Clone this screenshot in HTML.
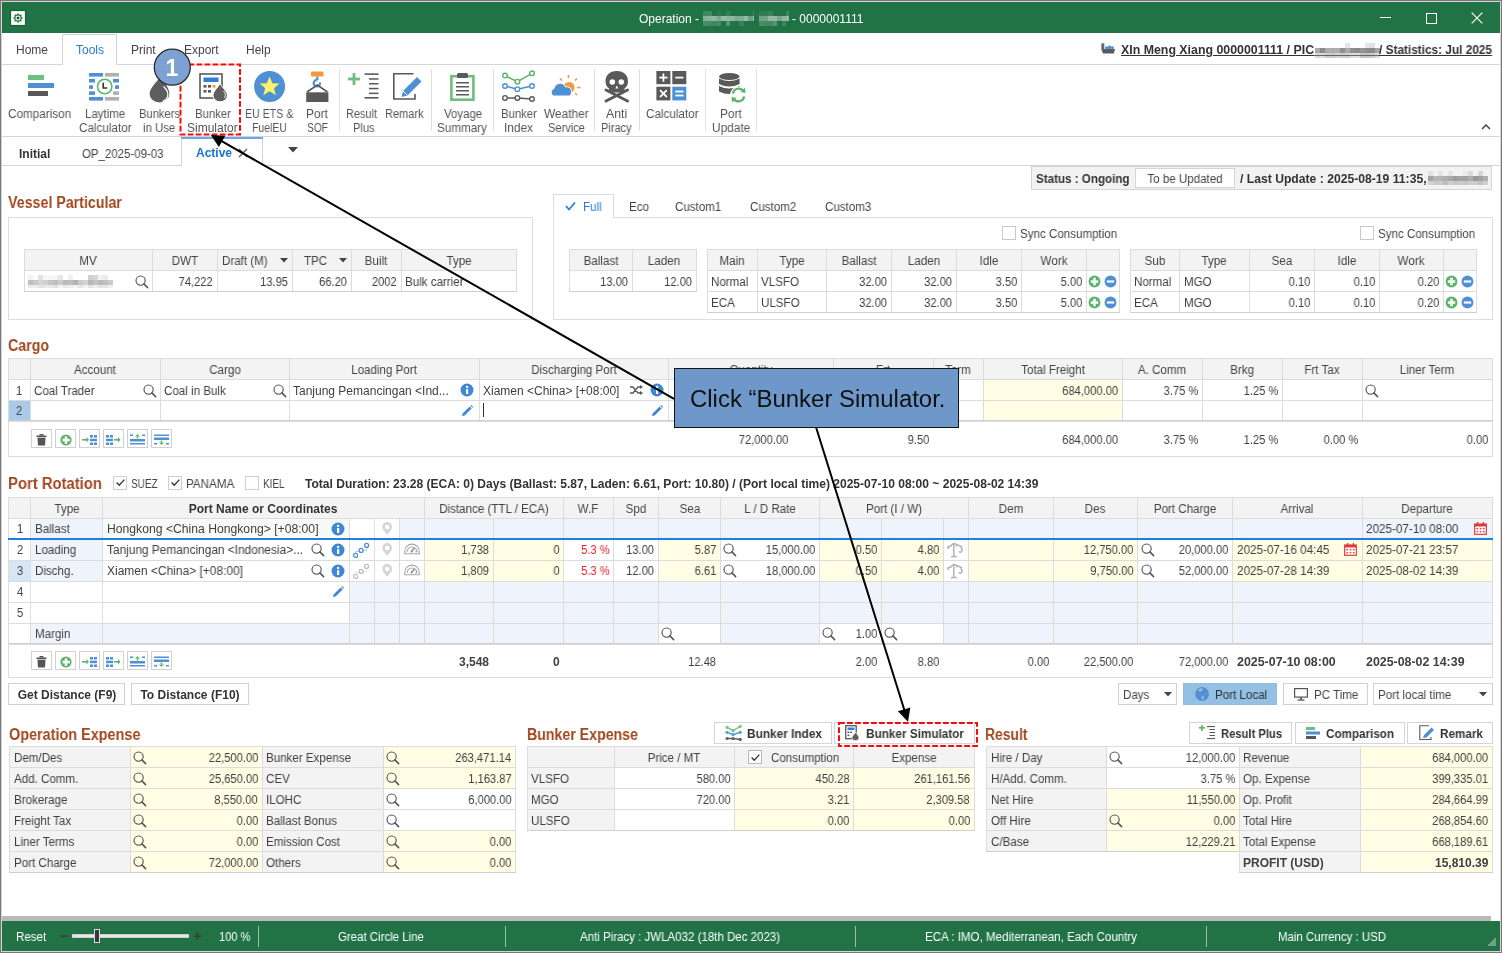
<!DOCTYPE html>
<html><head><meta charset="utf-8"><style>
html,body{margin:0;padding:0;width:1502px;height:953px;overflow:hidden;background:#fff}
body{position:relative;font-family:"Liberation Sans",sans-serif;font-size:12px;color:#404040}
div{position:absolute;box-sizing:border-box}
.t{white-space:nowrap;will-change:transform}
svg{overflow:visible}
</style></head><body>
<div style="left:0px;top:0px;width:1502px;height:953px;background:#fff"></div>
<div style="left:0px;top:0px;width:1502px;height:953px;background:#787878"></div>
<div style="left:1px;top:1px;width:1500px;height:951px;background:#d4d4d4"></div>
<div style="left:2px;top:2px;width:1498px;height:949px;background:#fff"></div>
<div style="left:2px;top:2px;width:1498px;height:31px;background:#217346"></div>
<svg style="position:absolute;left:10px;top:10px;" width="16" height="16" viewBox="0 0 16 16"><rect x="0.5" y="0.5" width="15" height="15" fill="#fff" stroke="#0e6a2c" stroke-width="1.2"/><g fill="#1f6e3a"><path d="M8 3 L9.3 4.7 L11.5 4.5 L11.3 6.7 L13 8 L11.3 9.3 L11.5 11.5 L9.3 11.3 L8 13 L6.7 11.3 L4.5 11.5 L4.7 9.3 L3 8 L4.7 6.7 L4.5 4.5 L6.7 4.7 Z"/></g><circle cx="8" cy="8" r="2.6" fill="#e8f2ea"/><circle cx="8" cy="8" r="1.3" fill="#0a4a20"/></svg>
<div class="t" style="left:639px;top:10.5px;height:16px;line-height:16px;color:#fff;font-size:12px">Operation -</div>
<div style="left:703px;top:11px;width:4.5px;height:5px;background:rgb(64,134,96)"></div><div style="left:707.5px;top:11px;width:4.5px;height:5px;background:rgb(66,136,98)"></div><div style="left:716.5px;top:11px;width:4.5px;height:5px;background:rgb(44,122,79)"></div><div style="left:725.5px;top:11px;width:4.5px;height:5px;background:rgb(52,127,86)"></div><div style="left:752.5px;top:11px;width:1.5px;height:5px;background:rgb(68,137,99)"></div><div style="left:703px;top:16px;width:4.5px;height:5px;background:rgb(128,175,149)"></div><div style="left:707.5px;top:16px;width:4.5px;height:5px;background:rgb(136,180,156)"></div><div style="left:712.0px;top:16px;width:4.5px;height:5px;background:rgb(141,183,160)"></div><div style="left:716.5px;top:16px;width:4.5px;height:5px;background:rgb(116,167,139)"></div><div style="left:721.0px;top:16px;width:4.5px;height:5px;background:rgb(147,187,165)"></div><div style="left:725.5px;top:16px;width:4.5px;height:5px;background:rgb(139,182,158)"></div><div style="left:730.0px;top:16px;width:4.5px;height:5px;background:rgb(139,181,158)"></div><div style="left:734.5px;top:16px;width:4.5px;height:5px;background:rgb(121,170,143)"></div><div style="left:739.0px;top:16px;width:4.5px;height:5px;background:rgb(124,172,146)"></div><div style="left:743.5px;top:16px;width:4.5px;height:5px;background:rgb(148,187,166)"></div><div style="left:748.0px;top:16px;width:4.5px;height:5px;background:rgb(107,161,131)"></div><div style="left:752.5px;top:16px;width:1.5px;height:5px;background:rgb(153,190,170)"></div><div style="left:703px;top:21px;width:4.5px;height:5px;background:rgb(74,141,104)"></div><div style="left:707.5px;top:21px;width:4.5px;height:5px;background:rgb(69,138,100)"></div><div style="left:712.0px;top:21px;width:4.5px;height:5px;background:rgb(64,134,95)"></div><div style="left:716.5px;top:21px;width:4.5px;height:5px;background:rgb(72,140,103)"></div><div style="left:725.5px;top:21px;width:4.5px;height:5px;background:rgb(85,148,114)"></div><div style="left:739.0px;top:21px;width:4.5px;height:5px;background:rgb(56,130,89)"></div>
<div style="left:759px;top:11px;width:4.5px;height:5px;background:rgb(47,124,82)"></div><div style="left:763.5px;top:11px;width:4.5px;height:5px;background:rgb(49,125,84)"></div><div style="left:768.0px;top:11px;width:4.5px;height:5px;background:rgb(59,131,91)"></div><div style="left:786.0px;top:11px;width:3.0px;height:5px;background:rgb(64,134,96)"></div><div style="left:759px;top:16px;width:4.5px;height:5px;background:rgb(109,163,133)"></div><div style="left:763.5px;top:16px;width:4.5px;height:5px;background:rgb(111,164,135)"></div><div style="left:768.0px;top:16px;width:4.5px;height:5px;background:rgb(145,186,163)"></div><div style="left:772.5px;top:16px;width:4.5px;height:5px;background:rgb(144,185,162)"></div><div style="left:777.0px;top:16px;width:4.5px;height:5px;background:rgb(116,167,139)"></div><div style="left:781.5px;top:16px;width:4.5px;height:5px;background:rgb(140,182,159)"></div><div style="left:786.0px;top:16px;width:3.0px;height:5px;background:rgb(148,187,166)"></div><div style="left:759px;top:21px;width:4.5px;height:5px;background:rgb(73,140,103)"></div><div style="left:763.5px;top:21px;width:4.5px;height:5px;background:rgb(69,138,100)"></div><div style="left:768.0px;top:21px;width:4.5px;height:5px;background:rgb(68,137,99)"></div><div style="left:772.5px;top:21px;width:4.5px;height:5px;background:rgb(86,148,114)"></div><div style="left:781.5px;top:21px;width:4.5px;height:5px;background:rgb(62,133,94)"></div>
<div class="t" style="left:792px;top:10.5px;height:16px;line-height:16px;color:#fff;font-size:12px">- 0000001111</div>
<div style="left:1380px;top:17px;width:11px;height:1px;background:#fff"></div>
<div style="left:1426px;top:13px;width:11px;height:11px;border:1px solid #fff;box-sizing:border-box"></div>
<svg style="position:absolute;left:1471px;top:12px;" width="12" height="12" viewBox="0 0 12 12"><line x1="0.7" y1="0.7" x2="11.3" y2="11.3" stroke="#fff" stroke-width="1.2"/><line x1="11.3" y1="0.7" x2="0.7" y2="11.3" stroke="#fff" stroke-width="1.2"/></svg>
<div style="left:2px;top:64px;width:1498px;height:1px;background:#d5d5d5"></div>
<div style="left:62px;top:34px;width:55px;height:31px;background:#fff;border:1px solid #d5d5d5;border-bottom:none;box-sizing:border-box"></div>
<div class="t" style="left:16px;top:42.0px;height:16px;line-height:16px;color:#444;font-size:12px">Home</div>
<div class="t" style="left:76px;top:42.0px;height:16px;line-height:16px;color:#2a7bd0;font-size:12px">Tools</div>
<div class="t" style="left:130.5px;top:42.0px;height:16px;line-height:16px;color:#444;font-size:12px">Print</div>
<div class="t" style="left:183.5px;top:42.0px;height:16px;line-height:16px;color:#444;font-size:12px">Export</div>
<div class="t" style="left:245.5px;top:42.0px;height:16px;line-height:16px;color:#444;font-size:12px">Help</div>
<svg style="position:absolute;left:1101px;top:43px;" width="15" height="11" viewBox="0 0 15 11"><path d="M0.3 6 L14 6 L12.8 10.6 L2 10.6 Z" fill="#5a5a5a"/><rect x="0.3" y="0.3" width="3" height="6" fill="#6a6a6a"/><g fill="#4f8fd4"><circle cx="5.6" cy="4.8" r="1.6"/><circle cx="8.6" cy="4.3" r="1.9"/><circle cx="11.5" cy="4.8" r="1.5"/></g></svg>
<div class="t" style="left:1121px;top:42.0px;height:16px;line-height:16px;font-size:12px;font-weight:bold;transform:scaleX(1.0301);transform-origin:0 0;color:#333;text-decoration:underline">XIn Meng Xiang 0000001111 / PIC</div>
<div style="left:1345px;top:43px;width:5px;height:5px;background:rgb(229,229,229)"></div><div style="left:1365px;top:43px;width:5px;height:5px;background:rgb(229,229,229)"></div><div style="left:1370px;top:43px;width:5px;height:5px;background:rgb(225,225,225)"></div><div style="left:1315px;top:48px;width:5px;height:5px;background:rgb(170,170,170)"></div><div style="left:1320px;top:48px;width:5px;height:5px;background:rgb(140,140,140)"></div><div style="left:1325px;top:48px;width:5px;height:5px;background:rgb(172,172,172)"></div><div style="left:1330px;top:48px;width:5px;height:5px;background:rgb(173,173,173)"></div><div style="left:1335px;top:48px;width:5px;height:5px;background:rgb(174,174,174)"></div><div style="left:1340px;top:48px;width:5px;height:5px;background:rgb(142,142,142)"></div><div style="left:1345px;top:48px;width:5px;height:5px;background:rgb(170,170,170)"></div><div style="left:1350px;top:48px;width:5px;height:5px;background:rgb(142,142,142)"></div><div style="left:1355px;top:48px;width:5px;height:5px;background:rgb(138,138,138)"></div><div style="left:1360px;top:48px;width:5px;height:5px;background:rgb(150,150,150)"></div><div style="left:1365px;top:48px;width:5px;height:5px;background:rgb(139,139,139)"></div><div style="left:1370px;top:48px;width:5px;height:5px;background:rgb(138,138,138)"></div><div style="left:1375px;top:48px;width:5px;height:5px;background:rgb(166,166,166)"></div><div style="left:1315px;top:53px;width:5px;height:5px;background:rgb(217,217,217)"></div><div style="left:1320px;top:53px;width:5px;height:5px;background:rgb(220,220,220)"></div><div style="left:1325px;top:53px;width:5px;height:5px;background:rgb(203,203,203)"></div><div style="left:1330px;top:53px;width:5px;height:5px;background:rgb(200,200,200)"></div><div style="left:1335px;top:53px;width:5px;height:5px;background:rgb(212,212,212)"></div><div style="left:1340px;top:53px;width:5px;height:5px;background:rgb(207,207,207)"></div><div style="left:1345px;top:53px;width:5px;height:5px;background:rgb(207,207,207)"></div><div style="left:1350px;top:53px;width:5px;height:5px;background:rgb(220,220,220)"></div><div style="left:1355px;top:53px;width:5px;height:5px;background:rgb(222,222,222)"></div><div style="left:1360px;top:53px;width:5px;height:5px;background:rgb(195,195,195)"></div><div style="left:1365px;top:53px;width:5px;height:5px;background:rgb(197,197,197)"></div><div style="left:1370px;top:53px;width:5px;height:5px;background:rgb(204,204,204)"></div><div style="left:1375px;top:53px;width:5px;height:5px;background:rgb(221,221,221)"></div>
<div style="left:1314px;top:55px;width:66px;height:1px;background:#666"></div>
<div class="t" style="left:1379.3px;top:42.0px;height:16px;line-height:16px;font-size:12px;font-weight:bold;transform:scaleX(0.9854);transform-origin:0 0;color:#333;text-decoration:underline">/ Statistics: Jul 2025</div>
<div style="left:2px;top:136px;width:1498px;height:1px;background:#d5d5d5"></div>
<svg style="position:absolute;left:1481px;top:123px;" width="10" height="7" viewBox="0 0 10 7"><polyline points="1,6 5,2 9,6" fill="none" stroke="#444" stroke-width="1.5"/></svg>
<div style="left:2px;top:165px;width:179px;height:1px;background:#d5d5d5"></div>
<div style="left:263px;top:165px;width:1237px;height:1px;background:#d5d5d5"></div>
<div style="left:181px;top:137px;width:1px;height:29px;background:#d5d5d5"></div>
<div style="left:262px;top:137px;width:1px;height:29px;background:#d5d5d5"></div>
<div style="left:181px;top:137px;width:82px;height:2px;background:#6aa6ea"></div>
<div class="t" style="left:18.5px;top:145.5px;height:16px;line-height:16px;color:#333;font-weight:bold;font-size:12px">Initial</div>
<div class="t" style="left:81.6px;top:145.5px;height:16px;line-height:16px;font-size:12px;transform:scaleX(0.9546);transform-origin:0 0;color:#444">OP_2025-09-03</div>
<div class="t" style="left:195.7px;top:145.2px;height:16px;line-height:16px;color:#1a73d0;font-weight:bold;font-size:12px">Active</div>
<svg style="position:absolute;left:238px;top:148px;" width="10" height="10" viewBox="0 0 10 10"><line x1="1" y1="1" x2="9" y2="9" stroke="#555" stroke-width="1.2"/><line x1="9" y1="1" x2="1" y2="9" stroke="#555" stroke-width="1.2"/></svg>
<svg style="position:absolute;left:288px;top:147px;" width="10" height="6" viewBox="0 0 10 6"><path d="M0 0 L10 0 L5 5.5 Z" fill="#444"/></svg>
<div style="left:339px;top:69px;width:1px;height:62px;background:#e0e0e0"></div>
<div style="left:431px;top:69px;width:1px;height:62px;background:#e0e0e0"></div>
<div style="left:493px;top:69px;width:1px;height:62px;background:#e0e0e0"></div>
<div style="left:594px;top:69px;width:1px;height:62px;background:#e0e0e0"></div>
<div style="left:639px;top:69px;width:1px;height:62px;background:#e0e0e0"></div>
<div style="left:705px;top:69px;width:1px;height:62px;background:#e0e0e0"></div>
<div style="left:756px;top:69px;width:1px;height:62px;background:#e0e0e0"></div>
<div style="left:28px;top:75px;width:16px;height:5px;background:#6cbf7c"></div>
<div style="left:28px;top:83px;width:26px;height:5px;background:#4f8fd4"></div>
<div style="left:28px;top:91px;width:20px;height:5px;background:#595959"></div>
<div class="t" style="left:8px;top:105.8px;height:16px;line-height:16px;font-size:12px;transform:scaleX(0.9768);transform-origin:0 0;color:#555;font-size:12px">Comparison</div>
<svg style="position:absolute;left:88.8px;top:72.7px;" width="30" height="28" viewBox="0 0 30 28"><rect x="0" y="0.0" width="14" height="3.6" fill="#4f8fd4"/><rect x="16" y="0.0" width="14" height="3.6" fill="#b0b0b0"/><rect x="0" y="5.8999999999999915" width="6" height="3.6" fill="#4f8fd4"/><rect x="24" y="5.8999999999999915" width="6" height="3.6" fill="#4f8fd4"/><rect x="0" y="12.299999999999997" width="4" height="3.6" fill="#4f8fd4"/><rect x="26" y="12.299999999999997" width="4" height="3.6" fill="#4f8fd4"/><rect x="0" y="18.299999999999997" width="6" height="3.6" fill="#4f8fd4"/><rect x="24" y="18.299999999999997" width="6" height="3.6" fill="#b0b0b0"/><rect x="0" y="24.0" width="14" height="3.6" fill="#4f8fd4"/><rect x="16" y="24.0" width="14" height="3.6" fill="#b0b0b0"/><circle cx="15.7" cy="13.5" r="7.2" fill="#fff" stroke="#5cb46c" stroke-width="1.6"/><polyline points="14.2,9.8 14.2,15 18.2,15" fill="none" stroke="#333" stroke-width="1.6"/></svg>
<div class="t" style="left:84.9px;top:105.8px;height:16px;line-height:16px;font-size:12px;transform:scaleX(0.9592);transform-origin:0 0;color:#555;font-size:12px">Laytime</div>
<div class="t" style="left:78.9px;top:119.8px;height:16px;line-height:16px;font-size:12px;transform:scaleX(0.9735);transform-origin:0 0;color:#555;font-size:12px">Calculator</div>
<svg style="position:absolute;left:149px;top:76px;" width="22" height="27" viewBox="0 0 22 27"><path d="M11.5 0.5 C8 6 0.6 12 0.6 18 A9.9 8.4 0 0 0 20.4 18 C20.4 12 15 6 11.5 0.5 Z" fill="#5e5e5e"/><path d="M14.5 10.5 C18.5 14 19.5 18 18.5 21 C17.5 23.5 15.5 25 13.5 25.5" fill="none" stroke="#fff" stroke-width="1.2"/></svg>
<div class="t" style="left:138.8px;top:105.8px;height:16px;line-height:16px;font-size:12px;transform:scaleX(0.9315);transform-origin:0 0;color:#555;font-size:12px">Bunkers</div>
<div class="t" style="left:142.5px;top:119.8px;height:16px;line-height:16px;font-size:12px;transform:scaleX(0.9496);transform-origin:0 0;color:#555;font-size:12px">in Use</div>
<svg style="position:absolute;left:199px;top:73px;" width="30" height="29" viewBox="0 0 30 29"><rect x="1" y="1" width="22" height="24" fill="#fff" stroke="#595959" stroke-width="1.6"/><rect x="4.5" y="4.5" width="15" height="4.5" fill="#2f7ed8"/><g fill="#595959"><rect x="4.5" y="12" width="3" height="2.6"/><rect x="9" y="12" width="3" height="2.6"/><rect x="4.5" y="17" width="3" height="2.6"/><rect x="9" y="17" width="3" height="2.6"/></g><rect x="13.5" y="12" width="3" height="2.6" fill="#f0a030"/><path d="M21 10.5 C18.5 15 14 18.5 14 22.5 A7.2 6.3 0 0 0 28.4 22.5 C28.4 18.5 23.5 15 21 10.5 Z" fill="#5e5e5e" stroke="#fff" stroke-width="1"/><path d="M24.5 18 C26.5 20 27 22.5 25.5 25" fill="none" stroke="#fff" stroke-width="0.9"/></svg>
<div class="t" style="left:194.7px;top:105.8px;height:16px;line-height:16px;font-size:12px;transform:scaleX(0.9470);transform-origin:0 0;color:#555;font-size:12px">Bunker</div>
<div class="t" style="left:187.4px;top:119.8px;height:16px;line-height:16px;font-size:12px;transform:scaleX(0.9983);transform-origin:0 0;color:#555;font-size:12px">Simulator</div>
<svg style="position:absolute;left:253.5px;top:71px;" width="32" height="32" viewBox="0 0 32 32"><circle cx="15.6" cy="15.5" r="15.5" fill="#4f8fd4"/><path d="M15.6 5.5 L18.4 12.3 L25.5 12.6 L20 17.2 L21.9 24.2 L15.6 20.3 L9.3 24.2 L11.2 17.2 L5.7 12.6 L12.8 12.3 Z" fill="#f7f16b"/></svg>
<div class="t" style="left:245.3px;top:105.8px;height:16px;line-height:16px;font-size:12px;transform:scaleX(0.8837);transform-origin:0 0;color:#555;font-size:12px">EU ETS &amp;</div>
<div class="t" style="left:252px;top:119.8px;height:16px;line-height:16px;font-size:12px;transform:scaleX(0.8747);transform-origin:0 0;color:#555;font-size:12px">FuelEU</div>
<svg style="position:absolute;left:305.5px;top:71px;" width="23" height="32" viewBox="0 0 23 32"><rect x="5" y="0.5" width="12.5" height="5" rx="1" fill="#f39a3c"/><path d="M11.3 5.5 L11.3 9" stroke="#4f8fd4" stroke-width="2"/><path d="M14 11.5 A3.2 3.2 0 1 1 11.3 9" fill="none" stroke="#4f8fd4" stroke-width="2.2"/><polyline points="1,21 11.3,14 21.5,21" fill="none" stroke="#595959" stroke-width="1.6"/><rect x="0.2" y="21.3" width="22.2" height="9.7" fill="#595959"/></svg>
<div class="t" style="left:306.3px;top:105.8px;height:16px;line-height:16px;font-size:12px;transform:scaleX(0.9864);transform-origin:0 0;color:#555;font-size:12px">Port</div>
<div class="t" style="left:307px;top:119.8px;height:16px;line-height:16px;font-size:12px;transform:scaleX(0.8517);transform-origin:0 0;color:#555;font-size:12px">SOF</div>
<svg style="position:absolute;left:347.5px;top:73px;" width="31" height="26" viewBox="0 0 31 26"><rect x="0" y="4.6" width="12" height="2.8" fill="#6cbf7c"/><rect x="4.6" y="0" width="2.8" height="12" fill="#6cbf7c"/><g fill="#595959"><rect x="16.5" y="0.3" width="14" height="1.6"/><rect x="21" y="5.2" width="9.5" height="1.5"/><rect x="21" y="10" width="9.5" height="1.5"/><rect x="21" y="14.8" width="9.5" height="1.5"/><rect x="21" y="19.6" width="9.5" height="1.5"/><rect x="16.5" y="24" width="14" height="1.6"/></g></svg>
<div class="t" style="left:346.2px;top:105.8px;height:16px;line-height:16px;font-size:12px;transform:scaleX(0.9113);transform-origin:0 0;color:#555;font-size:12px">Result</div>
<div class="t" style="left:353px;top:119.8px;height:16px;line-height:16px;font-size:12px;transform:scaleX(0.9253);transform-origin:0 0;color:#555;font-size:12px">Plus</div>
<svg style="position:absolute;left:392.5px;top:73px;" width="30" height="27" viewBox="0 0 30 27"><path d="M20.5 0.8 L0.8 0.8 L0.8 26 L22 26 L22 21" fill="none" stroke="#595959" stroke-width="1.6"/><path d="M8.5 24 L10 18 L24 4 L28.5 8.5 L14.5 22.5 Z" fill="#4f8fd4"/><path d="M10 18 L14.5 22.5" stroke="#fff" stroke-width="1"/></svg>
<div class="t" style="left:385.2px;top:105.8px;height:16px;line-height:16px;font-size:12px;transform:scaleX(0.9187);transform-origin:0 0;color:#555;font-size:12px">Remark</div>
<svg style="position:absolute;left:450px;top:73px;" width="26" height="28" viewBox="0 0 26 28"><rect x="1.4" y="3.2" width="22" height="23.5" fill="none" stroke="#6cbf7c" stroke-width="2.6"/><rect x="7" y="0" width="11" height="5" rx="1.5" fill="#595959"/><g fill="#595959"><rect x="6" y="9" width="13" height="1.5"/><rect x="6" y="13" width="13" height="1.5"/><rect x="6" y="17" width="13" height="1.5"/><rect x="6" y="21" width="13" height="1.5"/></g></svg>
<div class="t" style="left:443.8px;top:105.8px;height:16px;line-height:16px;font-size:12px;transform:scaleX(0.9543);transform-origin:0 0;color:#555;font-size:12px">Voyage</div>
<div class="t" style="left:437.1px;top:119.8px;height:16px;line-height:16px;font-size:12px;transform:scaleX(0.9719);transform-origin:0 0;color:#555;font-size:12px">Summary</div>
<svg style="position:absolute;left:501px;top:70px;" width="36" height="34" viewBox="0 0 36 34"><polyline points="4,5.6 16.4,11.7 31,3.3" fill="none" stroke="#5cb46c" stroke-width="1.5"/><circle cx="4" cy="5.6" r="2.3" fill="#fff" stroke="#5cb46c" stroke-width="1.4"/><circle cx="16.4" cy="11.7" r="2.3" fill="#fff" stroke="#5cb46c" stroke-width="1.4"/><circle cx="31" cy="3.3" r="2.3" fill="#fff" stroke="#5cb46c" stroke-width="1.4"/><polyline points="4,16 16.4,19.2 31,16" fill="none" stroke="#4f8fd4" stroke-width="1.5"/><circle cx="4" cy="16" r="2.3" fill="#fff" stroke="#4f8fd4" stroke-width="1.4"/><circle cx="16.4" cy="19.2" r="2.3" fill="#fff" stroke="#4f8fd4" stroke-width="1.4"/><circle cx="31" cy="16" r="2.3" fill="#fff" stroke="#4f8fd4" stroke-width="1.4"/><polyline points="4,27.9 16.4,27.9 31,29" fill="none" stroke="#595959" stroke-width="1.5"/><circle cx="4" cy="27.9" r="2.3" fill="#fff" stroke="#595959" stroke-width="1.4"/><circle cx="16.4" cy="27.9" r="2.3" fill="#fff" stroke="#595959" stroke-width="1.4"/><circle cx="31" cy="29" r="2.3" fill="#fff" stroke="#595959" stroke-width="1.4"/></svg>
<div class="t" style="left:500.6px;top:105.8px;height:16px;line-height:16px;font-size:12px;transform:scaleX(0.9443);transform-origin:0 0;color:#555;font-size:12px">Bunker</div>
<div class="t" style="left:504.2px;top:119.8px;height:16px;line-height:16px;font-size:12px;transform:scaleX(0.9883);transform-origin:0 0;color:#555;font-size:12px">Index</div>
<svg style="position:absolute;left:550px;top:75px;" width="32" height="24" viewBox="0 0 32 24"><g stroke="#f39a3c" stroke-width="1.6"><line x1="18.5" y1="0" x2="18.5" y2="3"/><line x1="10" y1="3.5" x2="12" y2="5.5"/><line x1="27" y1="3.5" x2="25" y2="5.5"/><line x1="27" y1="12.5" x2="30.5" y2="12.5"/><line x1="25" y1="18" x2="27" y2="20"/></g><circle cx="19" cy="12.5" r="5.5" fill="#f39a3c"/><path d="M3.5 21 A4 4 0 0 1 4 13.5 A6 6 0 0 1 15.5 12 A4.6 4.6 0 0 1 21.5 16.5 A4.3 4.3 0 0 1 19.5 21 Z" fill="#4f8fd4" stroke="#fff" stroke-width="1"/></svg>
<div class="t" style="left:544.2px;top:105.8px;height:16px;line-height:16px;font-size:12px;transform:scaleX(0.9884);transform-origin:0 0;color:#555;font-size:12px">Weather</div>
<div class="t" style="left:548.2px;top:119.8px;height:16px;line-height:16px;font-size:12px;transform:scaleX(0.9221);transform-origin:0 0;color:#555;font-size:12px">Service</div>
<svg style="position:absolute;left:604px;top:70px;" width="26" height="33" viewBox="0 0 26 33"><path d="M12.8 1 C20 1 24 5.5 24 11.5 C24 15 22.5 17 20.5 18.5 L20.5 22.5 L5 22.5 L5 18.5 C3 17 1.5 15 1.5 11.5 C1.5 5.5 5.5 1 12.8 1 Z" fill="#595959"/><circle cx="8.3" cy="12" r="2.8" fill="#fff"/><circle cx="17.3" cy="12" r="2.8" fill="#fff"/><path d="M12.8 15.5 L11.3 18.5 L14.3 18.5 Z" fill="#fff"/><g stroke="#595959" stroke-width="3" stroke-linecap="round"><line x1="2" y1="20" x2="23.5" y2="31"/><line x1="23.5" y1="20" x2="2" y2="31"/></g></svg>
<div class="t" style="left:605.8px;top:105.8px;height:16px;line-height:16px;font-size:12px;transform:scaleX(1.0255);transform-origin:0 0;color:#555;font-size:12px">Anti</div>
<div class="t" style="left:601.4px;top:119.8px;height:16px;line-height:16px;font-size:12px;transform:scaleX(0.9177);transform-origin:0 0;color:#555;font-size:12px">Piracy</div>
<svg style="position:absolute;left:655.5px;top:71px;" width="31" height="30" viewBox="0 0 31 30"><rect x="0.4" y="0" width="14" height="13.2" fill="#595959"/><rect x="16.3" y="0" width="14" height="13.2" fill="#595959"/><rect x="0.4" y="15.7" width="14" height="13.7" fill="#595959"/><rect x="16.3" y="15.7" width="14" height="13.7" fill="#4f8fd4"/><g fill="#fff"><rect x="3.3" y="5.7" width="8.2" height="1.8"/><rect x="6.5" y="2.5" width="1.8" height="8.2"/><rect x="19.3" y="5.7" width="8.2" height="1.8"/><rect x="19.3" y="19.6" width="8.2" height="1.8"/><rect x="19.3" y="23.6" width="8.2" height="1.8"/></g><g stroke="#fff" stroke-width="1.8"><line x1="4" y1="19.2" x2="10.8" y2="26"/><line x1="10.8" y1="19.2" x2="4" y2="26"/></g></svg>
<div class="t" style="left:645.7px;top:105.8px;height:16px;line-height:16px;font-size:12px;transform:scaleX(0.9735);transform-origin:0 0;color:#555;font-size:12px">Calculator</div>
<svg style="position:absolute;left:719px;top:73px;" width="28" height="30" viewBox="0 0 28 30"><ellipse cx="10.3" cy="3.5" rx="10.3" ry="3.5" fill="#595959"/><path d="M0 5.5 Q10.3 10.5 20.6 5.5 L20.6 11 Q10.3 16 0 11 Z" fill="#595959"/><path d="M0 13 Q10.3 18 20.6 13 L20.6 18.5 Q10.3 23.5 0 18.5 Z" fill="#595959"/><circle cx="19.5" cy="22" r="8.5" fill="#fff"/><path d="M13.8 20.5 A6 6 0 0 1 24.5 18" fill="none" stroke="#5cb46c" stroke-width="2.2"/><path d="M25.2 23.5 A6 6 0 0 1 14.5 26" fill="none" stroke="#5cb46c" stroke-width="2.2"/><path d="M26 14.5 L26.5 20 L21.5 19 Z" fill="#5cb46c"/><path d="M13 29.5 L12.5 24 L17.5 25 Z" fill="#5cb46c"/></svg>
<div class="t" style="left:719.6px;top:105.8px;height:16px;line-height:16px;font-size:12px;transform:scaleX(0.9818);transform-origin:0 0;color:#555;font-size:12px">Port</div>
<div class="t" style="left:712px;top:119.8px;height:16px;line-height:16px;font-size:12px;transform:scaleX(0.9874);transform-origin:0 0;color:#555;font-size:12px">Update</div>
<div class="t" style="left:8px;top:192.5px;height:20px;line-height:20px;font-size:16px;font-weight:bold;transform:scaleX(0.8892);transform-origin:0 0;color:#a0481f">Vessel Particular</div>
<div style="left:8px;top:217px;width:525px;height:103px;border:1px solid #dcdcdc"></div>
<div style="left:24px;top:249px;width:128px;height:21px;background:#f3f3f3"></div>
<div style="left:152px;top:249px;width:65px;height:21px;background:#f3f3f3"></div>
<div style="left:217px;top:249px;width:75px;height:21px;background:#f3f3f3"></div>
<div style="left:292px;top:249px;width:59px;height:21px;background:#f3f3f3"></div>
<div style="left:351px;top:249px;width:50px;height:21px;background:#f3f3f3"></div>
<div style="left:401px;top:249px;width:115px;height:21px;background:#f3f3f3"></div>
<div style="left:24px;top:270px;width:128px;height:21px;background:#fff"></div>
<div style="left:152px;top:270px;width:65px;height:21px;background:#fff"></div>
<div style="left:217px;top:270px;width:75px;height:21px;background:#fff"></div>
<div style="left:292px;top:270px;width:59px;height:21px;background:#fff"></div>
<div style="left:351px;top:270px;width:50px;height:21px;background:#fff"></div>
<div style="left:401px;top:270px;width:115px;height:21px;background:#fff"></div>
<div style="left:24px;top:249px;width:1px;height:43px;background:#dcdcdc"></div>
<div style="left:152px;top:249px;width:1px;height:43px;background:#dcdcdc"></div>
<div style="left:217px;top:249px;width:1px;height:43px;background:#dcdcdc"></div>
<div style="left:292px;top:249px;width:1px;height:43px;background:#dcdcdc"></div>
<div style="left:351px;top:249px;width:1px;height:43px;background:#dcdcdc"></div>
<div style="left:401px;top:249px;width:1px;height:43px;background:#dcdcdc"></div>
<div style="left:516px;top:249px;width:1px;height:43px;background:#dcdcdc"></div>
<div style="left:24px;top:249px;width:493px;height:1px;background:#dcdcdc"></div>
<div style="left:24px;top:270px;width:493px;height:1px;background:#dcdcdc"></div>
<div style="left:24px;top:291px;width:493px;height:1px;background:#dcdcdc"></div>
<div style="left:24px;top:291px;width:493px;height:1px;background:#cfcfcf"></div>
<div class="t" style="left:-112.0px;top:252.5px;width:400px;height:16px;line-height:16px;text-align:center;transform:scaleX(0.965);transform-origin:50% 0;color:#444">MV</div>
<div class="t" style="left:-15.5px;top:252.5px;width:400px;height:16px;line-height:16px;text-align:center;transform:scaleX(0.965);transform-origin:50% 0;color:#444">DWT</div>
<div class="t" style="left:222px;top:252.5px;height:16px;line-height:16px;transform:scaleX(0.965);transform-origin:0 0;color:#444">Draft (M)</div>
<svg style="position:absolute;left:280px;top:258px;" width="8" height="5" viewBox="0 0 8 5"><path d="M0 0 L8 0 L4 4.5 Z" fill="#444"/></svg>
<div class="t" style="left:304px;top:252.5px;height:16px;line-height:16px;transform:scaleX(0.965);transform-origin:0 0;color:#444">TPC</div>
<svg style="position:absolute;left:339px;top:258px;" width="8" height="5" viewBox="0 0 8 5"><path d="M0 0 L8 0 L4 4.5 Z" fill="#444"/></svg>
<div class="t" style="left:176.0px;top:252.5px;width:400px;height:16px;line-height:16px;text-align:center;transform:scaleX(0.965);transform-origin:50% 0;color:#444">Built</div>
<div class="t" style="left:258.5px;top:252.5px;width:400px;height:16px;line-height:16px;text-align:center;transform:scaleX(0.965);transform-origin:50% 0;color:#444">Type</div>
<div style="left:28px;top:275px;width:5px;height:5px;background:rgb(242,242,242)"></div><div style="left:38px;top:275px;width:5px;height:5px;background:rgb(226,226,226)"></div><div style="left:43px;top:275px;width:5px;height:5px;background:rgb(246,246,246)"></div><div style="left:48px;top:275px;width:5px;height:5px;background:rgb(247,247,247)"></div><div style="left:53px;top:275px;width:5px;height:5px;background:rgb(245,245,245)"></div><div style="left:58px;top:275px;width:5px;height:5px;background:rgb(231,231,231)"></div><div style="left:68px;top:275px;width:5px;height:5px;background:rgb(239,239,239)"></div><div style="left:88px;top:275px;width:5px;height:5px;background:rgb(208,208,208)"></div><div style="left:93px;top:275px;width:5px;height:5px;background:rgb(213,213,213)"></div><div style="left:98px;top:275px;width:5px;height:5px;background:rgb(242,242,242)"></div><div style="left:103px;top:275px;width:5px;height:5px;background:rgb(235,235,235)"></div><div style="left:28px;top:280px;width:5px;height:5px;background:rgb(191,191,191)"></div><div style="left:33px;top:280px;width:5px;height:5px;background:rgb(200,200,200)"></div><div style="left:38px;top:280px;width:5px;height:5px;background:rgb(213,213,213)"></div><div style="left:43px;top:280px;width:5px;height:5px;background:rgb(207,207,207)"></div><div style="left:48px;top:280px;width:5px;height:5px;background:rgb(197,197,197)"></div><div style="left:53px;top:280px;width:5px;height:5px;background:rgb(191,191,191)"></div><div style="left:58px;top:280px;width:5px;height:5px;background:rgb(203,203,203)"></div><div style="left:63px;top:280px;width:5px;height:5px;background:rgb(186,186,186)"></div><div style="left:68px;top:280px;width:5px;height:5px;background:rgb(191,191,191)"></div><div style="left:73px;top:280px;width:5px;height:5px;background:rgb(178,178,178)"></div><div style="left:78px;top:280px;width:5px;height:5px;background:rgb(203,203,203)"></div><div style="left:83px;top:280px;width:5px;height:5px;background:rgb(211,211,211)"></div><div style="left:88px;top:280px;width:5px;height:5px;background:rgb(183,183,183)"></div><div style="left:93px;top:280px;width:5px;height:5px;background:rgb(195,195,195)"></div><div style="left:98px;top:280px;width:5px;height:5px;background:rgb(187,187,187)"></div><div style="left:103px;top:280px;width:5px;height:5px;background:rgb(191,191,191)"></div><div style="left:108px;top:280px;width:5px;height:5px;background:rgb(202,202,202)"></div><div style="left:28px;top:285px;width:5px;height:3px;background:rgb(234,234,234)"></div><div style="left:33px;top:285px;width:5px;height:3px;background:rgb(237,237,237)"></div><div style="left:38px;top:285px;width:5px;height:3px;background:rgb(226,226,226)"></div><div style="left:43px;top:285px;width:5px;height:3px;background:rgb(232,232,232)"></div><div style="left:48px;top:285px;width:5px;height:3px;background:rgb(231,231,231)"></div><div style="left:53px;top:285px;width:5px;height:3px;background:rgb(225,225,225)"></div><div style="left:58px;top:285px;width:5px;height:3px;background:rgb(241,241,241)"></div><div style="left:63px;top:285px;width:5px;height:3px;background:rgb(232,232,232)"></div><div style="left:68px;top:285px;width:5px;height:3px;background:rgb(237,237,237)"></div><div style="left:73px;top:285px;width:5px;height:3px;background:rgb(245,245,245)"></div><div style="left:78px;top:285px;width:5px;height:3px;background:rgb(230,230,230)"></div><div style="left:83px;top:285px;width:5px;height:3px;background:rgb(242,242,242)"></div><div style="left:88px;top:285px;width:5px;height:3px;background:rgb(227,227,227)"></div><div style="left:93px;top:285px;width:5px;height:3px;background:rgb(237,237,237)"></div><div style="left:98px;top:285px;width:5px;height:3px;background:rgb(227,227,227)"></div><div style="left:103px;top:285px;width:5px;height:3px;background:rgb(228,228,228)"></div><div style="left:108px;top:285px;width:5px;height:3px;background:rgb(238,238,238)"></div>
<svg style="position:absolute;left:135px;top:275px;" width="14" height="14" viewBox="0 0 14 14"><circle cx="5.6" cy="5.6" r="4.6" fill="none" stroke="#555" stroke-width="1.15"/><line x1="8.9" y1="8.9" x2="12.6" y2="12.6" stroke="#555" stroke-width="1.5" stroke-linecap="round"/></svg>
<div class="t" style="right:1289px;top:273.5px;height:16px;line-height:16px;text-align:right;transform:scaleX(0.93);transform-origin:100% 0;">74,222</div>
<div class="t" style="right:1214px;top:273.5px;height:16px;line-height:16px;text-align:right;transform:scaleX(0.93);transform-origin:100% 0;">13.95</div>
<div class="t" style="right:1155px;top:273.5px;height:16px;line-height:16px;text-align:right;transform:scaleX(0.93);transform-origin:100% 0;">66.20</div>
<div class="t" style="right:1105px;top:273.5px;height:16px;line-height:16px;text-align:right;transform:scaleX(0.93);transform-origin:100% 0;">2002</div>
<div class="t" style="left:405px;top:273.5px;height:16px;line-height:16px;transform:scaleX(0.965);transform-origin:0 0;">Bulk carrier</div>
<div style="left:553px;top:217px;width:940px;height:103px;border:1px solid #dcdcdc"></div>
<div style="left:553px;top:194px;width:61px;height:24px;background:#fff;border:1px solid #dcdcdc;border-bottom:none"></div>
<svg style="position:absolute;left:565px;top:201px;" width="11" height="10" viewBox="0 0 11 10"><polyline points="1,5 4,8.5 10,1.5" fill="none" stroke="#2a7bd0" stroke-width="1.7"/></svg>
<div class="t" style="left:583px;top:199.0px;height:16px;line-height:16px;transform:scaleX(0.965);transform-origin:0 0;color:#2a7bd0">Full</div>
<div class="t" style="left:629px;top:199.0px;height:16px;line-height:16px;transform:scaleX(0.965);transform-origin:0 0;color:#444">Eco</div>
<div class="t" style="left:675px;top:199.0px;height:16px;line-height:16px;transform:scaleX(0.965);transform-origin:0 0;color:#444">Custom1</div>
<div class="t" style="left:750px;top:199.0px;height:16px;line-height:16px;transform:scaleX(0.965);transform-origin:0 0;color:#444">Custom2</div>
<div class="t" style="left:825px;top:199.0px;height:16px;line-height:16px;transform:scaleX(0.965);transform-origin:0 0;color:#444">Custom3</div>
<div style="left:1002px;top:226px;width:14px;height:14px;border:1px solid #c8c8c8;background:#fff"></div>
<div class="t" style="left:1020px;top:226.0px;height:16px;line-height:16px;transform:scaleX(0.965);transform-origin:0 0;color:#444">Sync Consumption</div>
<div style="left:1360px;top:226px;width:14px;height:14px;border:1px solid #c8c8c8;background:#fff"></div>
<div class="t" style="left:1378px;top:226.0px;height:16px;line-height:16px;transform:scaleX(0.965);transform-origin:0 0;color:#444">Sync Consumption</div>
<div style="left:569px;top:249px;width:63px;height:21px;background:#f3f3f3"></div>
<div style="left:632px;top:249px;width:64px;height:21px;background:#f3f3f3"></div>
<div style="left:569px;top:270px;width:63px;height:21px;background:#fff"></div>
<div style="left:632px;top:270px;width:64px;height:21px;background:#fff"></div>
<div style="left:569px;top:249px;width:1px;height:43px;background:#dcdcdc"></div>
<div style="left:632px;top:249px;width:1px;height:43px;background:#dcdcdc"></div>
<div style="left:696px;top:249px;width:1px;height:43px;background:#dcdcdc"></div>
<div style="left:569px;top:249px;width:128px;height:1px;background:#dcdcdc"></div>
<div style="left:569px;top:270px;width:128px;height:1px;background:#dcdcdc"></div>
<div style="left:569px;top:291px;width:128px;height:1px;background:#dcdcdc"></div>
<div style="left:569px;top:291px;width:128px;height:1px;background:#cfcfcf"></div>
<div class="t" style="left:400.5px;top:252.5px;width:400px;height:16px;line-height:16px;text-align:center;transform:scaleX(0.965);transform-origin:50% 0;color:#444">Ballast</div>
<div class="t" style="left:464.0px;top:252.5px;width:400px;height:16px;line-height:16px;text-align:center;transform:scaleX(0.965);transform-origin:50% 0;color:#444">Laden</div>
<div class="t" style="right:874px;top:273.5px;height:16px;line-height:16px;text-align:right;transform:scaleX(0.93);transform-origin:100% 0;">13.00</div>
<div class="t" style="right:810px;top:273.5px;height:16px;line-height:16px;text-align:right;transform:scaleX(0.93);transform-origin:100% 0;">12.00</div>
<div style="left:707px;top:249px;width:50px;height:21px;background:#f3f3f3"></div>
<div style="left:757px;top:249px;width:69px;height:21px;background:#f3f3f3"></div>
<div style="left:826px;top:249px;width:65px;height:21px;background:#f3f3f3"></div>
<div style="left:891px;top:249px;width:65px;height:21px;background:#f3f3f3"></div>
<div style="left:956px;top:249px;width:65px;height:21px;background:#f3f3f3"></div>
<div style="left:1021px;top:249px;width:65px;height:21px;background:#f3f3f3"></div>
<div style="left:1086px;top:249px;width:33px;height:21px;background:#f3f3f3"></div>
<div style="left:707px;top:270px;width:50px;height:21px;background:#fff"></div>
<div style="left:757px;top:270px;width:69px;height:21px;background:#fff"></div>
<div style="left:826px;top:270px;width:65px;height:21px;background:#fff"></div>
<div style="left:891px;top:270px;width:65px;height:21px;background:#fff"></div>
<div style="left:956px;top:270px;width:65px;height:21px;background:#fff"></div>
<div style="left:1021px;top:270px;width:65px;height:21px;background:#fff"></div>
<div style="left:1086px;top:270px;width:33px;height:21px;background:#fff"></div>
<div style="left:707px;top:291px;width:50px;height:21px;background:#fff"></div>
<div style="left:757px;top:291px;width:69px;height:21px;background:#fff"></div>
<div style="left:826px;top:291px;width:65px;height:21px;background:#fff"></div>
<div style="left:891px;top:291px;width:65px;height:21px;background:#fff"></div>
<div style="left:956px;top:291px;width:65px;height:21px;background:#fff"></div>
<div style="left:1021px;top:291px;width:65px;height:21px;background:#fff"></div>
<div style="left:1086px;top:291px;width:33px;height:21px;background:#fff"></div>
<div style="left:707px;top:249px;width:1px;height:64px;background:#dcdcdc"></div>
<div style="left:757px;top:249px;width:1px;height:64px;background:#dcdcdc"></div>
<div style="left:826px;top:249px;width:1px;height:64px;background:#dcdcdc"></div>
<div style="left:891px;top:249px;width:1px;height:64px;background:#dcdcdc"></div>
<div style="left:956px;top:249px;width:1px;height:64px;background:#dcdcdc"></div>
<div style="left:1021px;top:249px;width:1px;height:64px;background:#dcdcdc"></div>
<div style="left:1086px;top:249px;width:1px;height:64px;background:#dcdcdc"></div>
<div style="left:1119px;top:249px;width:1px;height:64px;background:#dcdcdc"></div>
<div style="left:707px;top:249px;width:413px;height:1px;background:#dcdcdc"></div>
<div style="left:707px;top:270px;width:413px;height:1px;background:#dcdcdc"></div>
<div style="left:707px;top:291px;width:413px;height:1px;background:#dcdcdc"></div>
<div style="left:707px;top:312px;width:413px;height:1px;background:#dcdcdc"></div>
<div style="left:707px;top:312px;width:413px;height:1px;background:#cfcfcf"></div>
<div class="t" style="left:532.0px;top:252.5px;width:400px;height:16px;line-height:16px;text-align:center;transform:scaleX(0.965);transform-origin:50% 0;color:#444">Main</div>
<div class="t" style="left:591.5px;top:252.5px;width:400px;height:16px;line-height:16px;text-align:center;transform:scaleX(0.965);transform-origin:50% 0;color:#444">Type</div>
<div class="t" style="left:658.5px;top:252.5px;width:400px;height:16px;line-height:16px;text-align:center;transform:scaleX(0.965);transform-origin:50% 0;color:#444">Ballast</div>
<div class="t" style="left:723.5px;top:252.5px;width:400px;height:16px;line-height:16px;text-align:center;transform:scaleX(0.965);transform-origin:50% 0;color:#444">Laden</div>
<div class="t" style="left:788.5px;top:252.5px;width:400px;height:16px;line-height:16px;text-align:center;transform:scaleX(0.965);transform-origin:50% 0;color:#444">Idle</div>
<div class="t" style="left:853.5px;top:252.5px;width:400px;height:16px;line-height:16px;text-align:center;transform:scaleX(0.965);transform-origin:50% 0;color:#444">Work</div>
<div class="t" style="left:902.5px;top:252.5px;width:400px;height:16px;line-height:16px;text-align:center;color:#444"></div>
<div class="t" style="left:711px;top:273.5px;height:16px;line-height:16px;transform:scaleX(0.965);transform-origin:0 0;">Normal</div>
<div class="t" style="left:761px;top:273.5px;height:16px;line-height:16px;transform:scaleX(0.965);transform-origin:0 0;">VLSFO</div>
<div class="t" style="right:615px;top:273.5px;height:16px;line-height:16px;text-align:right;transform:scaleX(0.93);transform-origin:100% 0;">32.00</div>
<div class="t" style="right:550px;top:273.5px;height:16px;line-height:16px;text-align:right;transform:scaleX(0.93);transform-origin:100% 0;">32.00</div>
<div class="t" style="right:485px;top:273.5px;height:16px;line-height:16px;text-align:right;transform:scaleX(0.93);transform-origin:100% 0;">3.50</div>
<div class="t" style="right:420px;top:273.5px;height:16px;line-height:16px;text-align:right;transform:scaleX(0.93);transform-origin:100% 0;">5.00</div>
<svg style="position:absolute;left:1088px;top:274.5px;" width="13" height="13" viewBox="0 0 13 13"><circle cx="6.5" cy="6.5" r="5.9" fill="#5cb46c"/><rect x="2.8" y="5.3" width="7.4" height="2.5" fill="#fff"/><rect x="5.25" y="2.8" width="2.5" height="7.4" fill="#fff"/></svg>
<svg style="position:absolute;left:1103.7px;top:274.5px;" width="13" height="13" viewBox="0 0 13 13"><circle cx="6.5" cy="6.5" r="5.9" fill="#4f8fd4"/><rect x="2.8" y="5.4" width="7.4" height="2.2" fill="#fff"/></svg>
<div class="t" style="left:711px;top:294.5px;height:16px;line-height:16px;transform:scaleX(0.965);transform-origin:0 0;">ECA</div>
<div class="t" style="left:761px;top:294.5px;height:16px;line-height:16px;transform:scaleX(0.965);transform-origin:0 0;">ULSFO</div>
<div class="t" style="right:615px;top:294.5px;height:16px;line-height:16px;text-align:right;transform:scaleX(0.93);transform-origin:100% 0;">32.00</div>
<div class="t" style="right:550px;top:294.5px;height:16px;line-height:16px;text-align:right;transform:scaleX(0.93);transform-origin:100% 0;">32.00</div>
<div class="t" style="right:485px;top:294.5px;height:16px;line-height:16px;text-align:right;transform:scaleX(0.93);transform-origin:100% 0;">3.50</div>
<div class="t" style="right:420px;top:294.5px;height:16px;line-height:16px;text-align:right;transform:scaleX(0.93);transform-origin:100% 0;">5.00</div>
<svg style="position:absolute;left:1088px;top:295.5px;" width="13" height="13" viewBox="0 0 13 13"><circle cx="6.5" cy="6.5" r="5.9" fill="#5cb46c"/><rect x="2.8" y="5.3" width="7.4" height="2.5" fill="#fff"/><rect x="5.25" y="2.8" width="2.5" height="7.4" fill="#fff"/></svg>
<svg style="position:absolute;left:1103.7px;top:295.5px;" width="13" height="13" viewBox="0 0 13 13"><circle cx="6.5" cy="6.5" r="5.9" fill="#4f8fd4"/><rect x="2.8" y="5.4" width="7.4" height="2.2" fill="#fff"/></svg>
<div style="left:1130px;top:249px;width:49px;height:21px;background:#f3f3f3"></div>
<div style="left:1179px;top:249px;width:70px;height:21px;background:#f3f3f3"></div>
<div style="left:1249px;top:249px;width:65px;height:21px;background:#f3f3f3"></div>
<div style="left:1314px;top:249px;width:65px;height:21px;background:#f3f3f3"></div>
<div style="left:1379px;top:249px;width:64px;height:21px;background:#f3f3f3"></div>
<div style="left:1443px;top:249px;width:33px;height:21px;background:#f3f3f3"></div>
<div style="left:1130px;top:270px;width:49px;height:21px;background:#fff"></div>
<div style="left:1179px;top:270px;width:70px;height:21px;background:#fff"></div>
<div style="left:1249px;top:270px;width:65px;height:21px;background:#fff"></div>
<div style="left:1314px;top:270px;width:65px;height:21px;background:#fff"></div>
<div style="left:1379px;top:270px;width:64px;height:21px;background:#fff"></div>
<div style="left:1443px;top:270px;width:33px;height:21px;background:#fff"></div>
<div style="left:1130px;top:291px;width:49px;height:21px;background:#fff"></div>
<div style="left:1179px;top:291px;width:70px;height:21px;background:#fff"></div>
<div style="left:1249px;top:291px;width:65px;height:21px;background:#fff"></div>
<div style="left:1314px;top:291px;width:65px;height:21px;background:#fff"></div>
<div style="left:1379px;top:291px;width:64px;height:21px;background:#fff"></div>
<div style="left:1443px;top:291px;width:33px;height:21px;background:#fff"></div>
<div style="left:1130px;top:249px;width:1px;height:64px;background:#dcdcdc"></div>
<div style="left:1179px;top:249px;width:1px;height:64px;background:#dcdcdc"></div>
<div style="left:1249px;top:249px;width:1px;height:64px;background:#dcdcdc"></div>
<div style="left:1314px;top:249px;width:1px;height:64px;background:#dcdcdc"></div>
<div style="left:1379px;top:249px;width:1px;height:64px;background:#dcdcdc"></div>
<div style="left:1443px;top:249px;width:1px;height:64px;background:#dcdcdc"></div>
<div style="left:1476px;top:249px;width:1px;height:64px;background:#dcdcdc"></div>
<div style="left:1130px;top:249px;width:347px;height:1px;background:#dcdcdc"></div>
<div style="left:1130px;top:270px;width:347px;height:1px;background:#dcdcdc"></div>
<div style="left:1130px;top:291px;width:347px;height:1px;background:#dcdcdc"></div>
<div style="left:1130px;top:312px;width:347px;height:1px;background:#dcdcdc"></div>
<div style="left:1130px;top:312px;width:347px;height:1px;background:#cfcfcf"></div>
<div class="t" style="left:954.5px;top:252.5px;width:400px;height:16px;line-height:16px;text-align:center;transform:scaleX(0.965);transform-origin:50% 0;color:#444">Sub</div>
<div class="t" style="left:1014.0px;top:252.5px;width:400px;height:16px;line-height:16px;text-align:center;transform:scaleX(0.965);transform-origin:50% 0;color:#444">Type</div>
<div class="t" style="left:1081.5px;top:252.5px;width:400px;height:16px;line-height:16px;text-align:center;transform:scaleX(0.965);transform-origin:50% 0;color:#444">Sea</div>
<div class="t" style="left:1146.5px;top:252.5px;width:400px;height:16px;line-height:16px;text-align:center;transform:scaleX(0.965);transform-origin:50% 0;color:#444">Idle</div>
<div class="t" style="left:1211.0px;top:252.5px;width:400px;height:16px;line-height:16px;text-align:center;transform:scaleX(0.965);transform-origin:50% 0;color:#444">Work</div>
<div class="t" style="left:1259.5px;top:252.5px;width:400px;height:16px;line-height:16px;text-align:center;color:#444"></div>
<div class="t" style="left:1134px;top:273.5px;height:16px;line-height:16px;transform:scaleX(0.965);transform-origin:0 0;">Normal</div>
<div class="t" style="left:1184px;top:273.5px;height:16px;line-height:16px;transform:scaleX(0.965);transform-origin:0 0;">MGO</div>
<div class="t" style="right:192px;top:273.5px;height:16px;line-height:16px;text-align:right;transform:scaleX(0.93);transform-origin:100% 0;">0.10</div>
<div class="t" style="right:127px;top:273.5px;height:16px;line-height:16px;text-align:right;transform:scaleX(0.93);transform-origin:100% 0;">0.10</div>
<div class="t" style="right:63px;top:273.5px;height:16px;line-height:16px;text-align:right;transform:scaleX(0.93);transform-origin:100% 0;">0.20</div>
<svg style="position:absolute;left:1445.4px;top:274.5px;" width="13" height="13" viewBox="0 0 13 13"><circle cx="6.5" cy="6.5" r="5.9" fill="#5cb46c"/><rect x="2.8" y="5.3" width="7.4" height="2.5" fill="#fff"/><rect x="5.25" y="2.8" width="2.5" height="7.4" fill="#fff"/></svg>
<svg style="position:absolute;left:1461.4px;top:274.5px;" width="13" height="13" viewBox="0 0 13 13"><circle cx="6.5" cy="6.5" r="5.9" fill="#4f8fd4"/><rect x="2.8" y="5.4" width="7.4" height="2.2" fill="#fff"/></svg>
<div class="t" style="left:1134px;top:294.5px;height:16px;line-height:16px;transform:scaleX(0.965);transform-origin:0 0;">ECA</div>
<div class="t" style="left:1184px;top:294.5px;height:16px;line-height:16px;transform:scaleX(0.965);transform-origin:0 0;">MGO</div>
<div class="t" style="right:192px;top:294.5px;height:16px;line-height:16px;text-align:right;transform:scaleX(0.93);transform-origin:100% 0;">0.10</div>
<div class="t" style="right:127px;top:294.5px;height:16px;line-height:16px;text-align:right;transform:scaleX(0.93);transform-origin:100% 0;">0.10</div>
<div class="t" style="right:63px;top:294.5px;height:16px;line-height:16px;text-align:right;transform:scaleX(0.93);transform-origin:100% 0;">0.20</div>
<svg style="position:absolute;left:1445.4px;top:295.5px;" width="13" height="13" viewBox="0 0 13 13"><circle cx="6.5" cy="6.5" r="5.9" fill="#5cb46c"/><rect x="2.8" y="5.3" width="7.4" height="2.5" fill="#fff"/><rect x="5.25" y="2.8" width="2.5" height="7.4" fill="#fff"/></svg>
<svg style="position:absolute;left:1461.4px;top:295.5px;" width="13" height="13" viewBox="0 0 13 13"><circle cx="6.5" cy="6.5" r="5.9" fill="#4f8fd4"/><rect x="2.8" y="5.4" width="7.4" height="2.2" fill="#fff"/></svg>
<div style="left:1031px;top:166px;width:461px;height:24px;background:#f2f2f2;border:1px solid #d5d5d5"></div>
<div class="t" style="left:1036px;top:170.5px;height:16px;line-height:16px;font-size:12px;font-weight:bold;transform:scaleX(0.9677);transform-origin:0 0;color:#333">Status : Ongoing</div>
<div style="left:1135px;top:168px;width:100px;height:20px;background:#fff;border:1px solid #d5d5d5"></div>
<div class="t" style="left:985.0px;top:171.0px;width:400px;height:16px;line-height:16px;text-align:center;transform:scaleX(0.965);transform-origin:50% 0;color:#444">To be Updated</div>
<div class="t" style="left:1239.5px;top:170.5px;height:16px;line-height:16px;font-size:12px;font-weight:bold;transform:scaleX(1.0133);transform-origin:0 0;color:#333">/ Last Update : 2025-08-19 11:35,</div>
<div style="left:1428px;top:171px;width:5px;height:5px;background:rgb(226,226,226)"></div><div style="left:1438px;top:171px;width:5px;height:5px;background:rgb(228,228,228)"></div><div style="left:1448px;top:171px;width:5px;height:5px;background:rgb(228,228,228)"></div><div style="left:1463px;top:171px;width:5px;height:5px;background:rgb(234,234,234)"></div><div style="left:1468px;top:171px;width:5px;height:5px;background:rgb(219,219,219)"></div><div style="left:1478px;top:171px;width:5px;height:5px;background:rgb(213,213,213)"></div><div style="left:1428px;top:176px;width:5px;height:5px;background:rgb(163,163,163)"></div><div style="left:1433px;top:176px;width:5px;height:5px;background:rgb(182,182,182)"></div><div style="left:1438px;top:176px;width:5px;height:5px;background:rgb(180,180,180)"></div><div style="left:1443px;top:176px;width:5px;height:5px;background:rgb(175,175,175)"></div><div style="left:1448px;top:176px;width:5px;height:5px;background:rgb(168,168,168)"></div><div style="left:1453px;top:176px;width:5px;height:5px;background:rgb(157,157,157)"></div><div style="left:1458px;top:176px;width:5px;height:5px;background:rgb(163,163,163)"></div><div style="left:1463px;top:176px;width:5px;height:5px;background:rgb(162,162,162)"></div><div style="left:1468px;top:176px;width:5px;height:5px;background:rgb(174,174,174)"></div><div style="left:1473px;top:176px;width:5px;height:5px;background:rgb(152,152,152)"></div><div style="left:1478px;top:176px;width:5px;height:5px;background:rgb(161,161,161)"></div><div style="left:1483px;top:176px;width:5px;height:5px;background:rgb(175,175,175)"></div><div style="left:1428px;top:181px;width:5px;height:4px;background:rgb(211,211,211)"></div><div style="left:1433px;top:181px;width:5px;height:4px;background:rgb(202,202,202)"></div><div style="left:1438px;top:181px;width:5px;height:4px;background:rgb(203,203,203)"></div><div style="left:1443px;top:181px;width:5px;height:4px;background:rgb(190,190,190)"></div><div style="left:1448px;top:181px;width:5px;height:4px;background:rgb(207,207,207)"></div><div style="left:1453px;top:181px;width:5px;height:4px;background:rgb(200,200,200)"></div><div style="left:1458px;top:181px;width:5px;height:4px;background:rgb(202,202,202)"></div><div style="left:1463px;top:181px;width:5px;height:4px;background:rgb(196,196,196)"></div><div style="left:1468px;top:181px;width:5px;height:4px;background:rgb(206,206,206)"></div><div style="left:1473px;top:181px;width:5px;height:4px;background:rgb(204,204,204)"></div><div style="left:1478px;top:181px;width:5px;height:4px;background:rgb(193,193,193)"></div><div style="left:1483px;top:181px;width:5px;height:4px;background:rgb(206,206,206)"></div>
<div class="t" style="left:8px;top:336.0px;height:20px;line-height:20px;font-size:16px;font-weight:bold;transform:scaleX(0.8862);transform-origin:0 0;color:#a0481f">Cargo</div>
<div style="left:8px;top:358px;width:22px;height:21px;background:#f3f3f3"></div>
<div style="left:30px;top:358px;width:130px;height:21px;background:#f3f3f3"></div>
<div style="left:160px;top:358px;width:129px;height:21px;background:#f3f3f3"></div>
<div style="left:289px;top:358px;width:190px;height:21px;background:#f3f3f3"></div>
<div style="left:479px;top:358px;width:189px;height:21px;background:#f3f3f3"></div>
<div style="left:668px;top:358px;width:165px;height:21px;background:#f3f3f3"></div>
<div style="left:833px;top:358px;width:100px;height:21px;background:#f3f3f3"></div>
<div style="left:933px;top:358px;width:50px;height:21px;background:#f3f3f3"></div>
<div style="left:983px;top:358px;width:139px;height:21px;background:#f3f3f3"></div>
<div style="left:1122px;top:358px;width:80px;height:21px;background:#f3f3f3"></div>
<div style="left:1202px;top:358px;width:80px;height:21px;background:#f3f3f3"></div>
<div style="left:1282px;top:358px;width:80px;height:21px;background:#f3f3f3"></div>
<div style="left:1362px;top:358px;width:130px;height:21px;background:#f3f3f3"></div>
<div style="left:8px;top:379px;width:22px;height:21px;background:#fff"></div>
<div style="left:30px;top:379px;width:130px;height:21px;background:#fff"></div>
<div style="left:160px;top:379px;width:129px;height:21px;background:#fff"></div>
<div style="left:289px;top:379px;width:190px;height:21px;background:#fff"></div>
<div style="left:479px;top:379px;width:189px;height:21px;background:#fff"></div>
<div style="left:668px;top:379px;width:165px;height:21px;background:#fff"></div>
<div style="left:833px;top:379px;width:100px;height:21px;background:#fff"></div>
<div style="left:933px;top:379px;width:50px;height:21px;background:#fff"></div>
<div style="left:983px;top:379px;width:139px;height:21px;background:#fffde3"></div>
<div style="left:1122px;top:379px;width:80px;height:21px;background:#fff"></div>
<div style="left:1202px;top:379px;width:80px;height:21px;background:#fff"></div>
<div style="left:1282px;top:379px;width:80px;height:21px;background:#fff"></div>
<div style="left:1362px;top:379px;width:130px;height:21px;background:#fff"></div>
<div style="left:8px;top:400px;width:22px;height:21px;background:#a9cbe8"></div>
<div style="left:30px;top:400px;width:130px;height:21px;background:#fff"></div>
<div style="left:160px;top:400px;width:129px;height:21px;background:#fff"></div>
<div style="left:289px;top:400px;width:190px;height:21px;background:#fff"></div>
<div style="left:479px;top:400px;width:189px;height:21px;background:#fff"></div>
<div style="left:668px;top:400px;width:165px;height:21px;background:#fff"></div>
<div style="left:833px;top:400px;width:100px;height:21px;background:#fff"></div>
<div style="left:933px;top:400px;width:50px;height:21px;background:#fff"></div>
<div style="left:983px;top:400px;width:139px;height:21px;background:#fffde3"></div>
<div style="left:1122px;top:400px;width:80px;height:21px;background:#fff"></div>
<div style="left:1202px;top:400px;width:80px;height:21px;background:#fff"></div>
<div style="left:1282px;top:400px;width:80px;height:21px;background:#fff"></div>
<div style="left:1362px;top:400px;width:130px;height:21px;background:#fff"></div>
<div style="left:8px;top:358px;width:1px;height:64px;background:#dcdcdc"></div>
<div style="left:30px;top:358px;width:1px;height:64px;background:#dcdcdc"></div>
<div style="left:160px;top:358px;width:1px;height:64px;background:#dcdcdc"></div>
<div style="left:289px;top:358px;width:1px;height:64px;background:#dcdcdc"></div>
<div style="left:479px;top:358px;width:1px;height:64px;background:#dcdcdc"></div>
<div style="left:668px;top:358px;width:1px;height:64px;background:#dcdcdc"></div>
<div style="left:833px;top:358px;width:1px;height:64px;background:#dcdcdc"></div>
<div style="left:933px;top:358px;width:1px;height:64px;background:#dcdcdc"></div>
<div style="left:983px;top:358px;width:1px;height:64px;background:#dcdcdc"></div>
<div style="left:1122px;top:358px;width:1px;height:64px;background:#dcdcdc"></div>
<div style="left:1202px;top:358px;width:1px;height:64px;background:#dcdcdc"></div>
<div style="left:1282px;top:358px;width:1px;height:64px;background:#dcdcdc"></div>
<div style="left:1362px;top:358px;width:1px;height:64px;background:#dcdcdc"></div>
<div style="left:1492px;top:358px;width:1px;height:64px;background:#dcdcdc"></div>
<div style="left:8px;top:358px;width:1485px;height:1px;background:#dcdcdc"></div>
<div style="left:8px;top:379px;width:1485px;height:1px;background:#dcdcdc"></div>
<div style="left:8px;top:400px;width:1485px;height:1px;background:#dcdcdc"></div>
<div style="left:8px;top:421px;width:1485px;height:1px;background:#dcdcdc"></div>
<div style="left:8px;top:421px;width:1485px;height:36px;border:1px solid #dcdcdc;border-top:none"></div>
<div style="left:8px;top:420px;width:1485px;height:1px;background:#cfcfcf"></div>
<div class="t" style="left:-105.0px;top:361.5px;width:400px;height:16px;line-height:16px;text-align:center;transform:scaleX(0.965);transform-origin:50% 0;color:#444">Account</div>
<div class="t" style="left:24.5px;top:361.5px;width:400px;height:16px;line-height:16px;text-align:center;transform:scaleX(0.965);transform-origin:50% 0;color:#444">Cargo</div>
<div class="t" style="left:184.0px;top:361.5px;width:400px;height:16px;line-height:16px;text-align:center;transform:scaleX(0.965);transform-origin:50% 0;color:#444">Loading Port</div>
<div class="t" style="left:373.5px;top:361.5px;width:400px;height:16px;line-height:16px;text-align:center;transform:scaleX(0.965);transform-origin:50% 0;color:#444">Discharging Port</div>
<div class="t" style="left:550.5px;top:361.5px;width:400px;height:16px;line-height:16px;text-align:center;transform:scaleX(0.965);transform-origin:50% 0;color:#444">Quantity</div>
<div class="t" style="left:683.0px;top:361.5px;width:400px;height:16px;line-height:16px;text-align:center;transform:scaleX(0.965);transform-origin:50% 0;color:#444">Frt</div>
<div class="t" style="left:758.0px;top:361.5px;width:400px;height:16px;line-height:16px;text-align:center;transform:scaleX(0.965);transform-origin:50% 0;color:#444">Term</div>
<div class="t" style="left:852.5px;top:361.5px;width:400px;height:16px;line-height:16px;text-align:center;transform:scaleX(0.965);transform-origin:50% 0;color:#444">Total Freight</div>
<div class="t" style="left:962.0px;top:361.5px;width:400px;height:16px;line-height:16px;text-align:center;transform:scaleX(0.965);transform-origin:50% 0;color:#444">A. Comm</div>
<div class="t" style="left:1042.0px;top:361.5px;width:400px;height:16px;line-height:16px;text-align:center;transform:scaleX(0.965);transform-origin:50% 0;color:#444">Brkg</div>
<div class="t" style="left:1122.0px;top:361.5px;width:400px;height:16px;line-height:16px;text-align:center;transform:scaleX(0.965);transform-origin:50% 0;color:#444">Frt Tax</div>
<div class="t" style="left:1227.0px;top:361.5px;width:400px;height:16px;line-height:16px;text-align:center;transform:scaleX(0.965);transform-origin:50% 0;color:#444">Liner Term</div>
<div class="t" style="left:9.0px;top:382.5px;width:20px;height:16px;line-height:16px;text-align:center;transform:scaleX(0.93);transform-origin:50% 0;color:#444">1</div>
<div class="t" style="left:9.0px;top:402.5px;width:20px;height:16px;line-height:16px;text-align:center;transform:scaleX(0.93);transform-origin:50% 0;color:#444">2</div>
<div class="t" style="left:34px;top:382.5px;height:16px;line-height:16px;transform:scaleX(0.965);transform-origin:0 0;">Coal Trader</div>
<svg style="position:absolute;left:143px;top:384px;" width="14" height="14" viewBox="0 0 14 14"><circle cx="5.6" cy="5.6" r="4.6" fill="none" stroke="#555" stroke-width="1.15"/><line x1="8.9" y1="8.9" x2="12.6" y2="12.6" stroke="#555" stroke-width="1.5" stroke-linecap="round"/></svg>
<div class="t" style="left:164px;top:382.5px;height:16px;line-height:16px;transform:scaleX(0.965);transform-origin:0 0;">Coal in Bulk</div>
<svg style="position:absolute;left:273px;top:384px;" width="14" height="14" viewBox="0 0 14 14"><circle cx="5.6" cy="5.6" r="4.6" fill="none" stroke="#555" stroke-width="1.15"/><line x1="8.9" y1="8.9" x2="12.6" y2="12.6" stroke="#555" stroke-width="1.5" stroke-linecap="round"/></svg>
<div class="t" style="left:293px;top:382.5px;height:16px;line-height:16px;">Tanjung Pemancingan &lt;Ind...</div>
<svg style="position:absolute;left:460px;top:383px;" width="14" height="14" viewBox="0 0 14 14"><circle cx="7" cy="7" r="6.5" fill="#3f87d6"/><rect x="6" y="6" width="2.2" height="5" fill="#fff"/><circle cx="7.1" cy="3.9" r="1.2" fill="#fff"/></svg>
<div class="t" style="left:483px;top:382.5px;height:16px;line-height:16px;">Xiamen &lt;China&gt; [+08:00]</div>
<svg style="position:absolute;left:630px;top:385px;" width="13" height="10" viewBox="0 0 13 10"><path d="M0 2 L3 2 L8 8 L11 8 M0 8 L3 8 L8 2 L11 2" fill="none" stroke="#555" stroke-width="1.3"/><path d="M10 0 L13 2 L10 4 Z M10 6 L13 8 L10 10 Z" fill="#555"/></svg>
<svg style="position:absolute;left:650px;top:383px;" width="14" height="14" viewBox="0 0 14 14"><circle cx="7" cy="7" r="6.5" fill="#3f87d6"/><rect x="6" y="6" width="2.2" height="5" fill="#fff"/><circle cx="7.1" cy="3.9" r="1.2" fill="#fff"/></svg>
<div class="t" style="right:384px;top:382.5px;height:16px;line-height:16px;text-align:right;transform:scaleX(0.93);transform-origin:100% 0;">684,000.00</div>
<div class="t" style="right:304px;top:382.5px;height:16px;line-height:16px;text-align:right;transform:scaleX(0.93);transform-origin:100% 0;">3.75 %</div>
<div class="t" style="right:224px;top:382.5px;height:16px;line-height:16px;text-align:right;transform:scaleX(0.93);transform-origin:100% 0;">1.25 %</div>
<svg style="position:absolute;left:1365px;top:384px;" width="14" height="14" viewBox="0 0 14 14"><circle cx="5.6" cy="5.6" r="4.6" fill="none" stroke="#555" stroke-width="1.15"/><line x1="8.9" y1="8.9" x2="12.6" y2="12.6" stroke="#555" stroke-width="1.5" stroke-linecap="round"/></svg>
<svg style="position:absolute;left:460px;top:404px;" width="13" height="13" viewBox="0 0 13 13"><path d="M2 12 L2.6 9.4 L9.6 2.4 L11.6 4.4 L4.6 11.4 Z" fill="#3f87d6"/><path d="M10.3 1.7 L11.1 0.9 L13.1 2.9 L12.3 3.7 Z" fill="#3f87d6"/></svg>
<svg style="position:absolute;left:650px;top:404px;" width="13" height="13" viewBox="0 0 13 13"><path d="M2 12 L2.6 9.4 L9.6 2.4 L11.6 4.4 L4.6 11.4 Z" fill="#3f87d6"/><path d="M10.3 1.7 L11.1 0.9 L13.1 2.9 L12.3 3.7 Z" fill="#3f87d6"/></svg>
<div style="left:483px;top:403px;width:1px;height:14px;background:#333"></div>
<div style="left:31px;top:429px;width:21px;height:19px;border:1px solid #d0d0d0;background:#fff"></div>
<div style="left:55px;top:429px;width:21px;height:19px;border:1px solid #d0d0d0;background:#fff"></div>
<div style="left:79px;top:429px;width:21px;height:19px;border:1px solid #d0d0d0;background:#fff"></div>
<div style="left:103px;top:429px;width:21px;height:19px;border:1px solid #d0d0d0;background:#fff"></div>
<div style="left:127px;top:429px;width:21px;height:19px;border:1px solid #d0d0d0;background:#fff"></div>
<div style="left:151px;top:429px;width:21px;height:19px;border:1px solid #d0d0d0;background:#fff"></div>
<svg style="position:absolute;left:36px;top:433.5px;" width="12" height="12" viewBox="0 0 12 12"><rect x="0.5" y="1.5" width="10" height="1.6" fill="#555"/><rect x="3.5" y="0" width="4" height="1.5" fill="#555"/><path d="M1.5 3.8 L9.5 3.8 L9 11.5 L2 11.5 Z" fill="#555"/></svg>
<svg style="position:absolute;left:60px;top:433.5px;" width="12" height="12" viewBox="0 0 12 12"><circle cx="6" cy="6" r="5.6" fill="#5cb46c"/><rect x="2.5" y="4.8" width="7.4" height="2.5" fill="#fff"/><rect x="4.75" y="2.5" width="2.5" height="7.4" fill="#fff"/></svg>
<svg style="position:absolute;left:82px;top:433.5px;" width="16" height="12" viewBox="0 0 16 12"><rect x="0" y="5" width="5" height="1.6" fill="#5cb46c"/><path d="M4.5 3 L7 5.8 L4.5 8.6 Z" fill="#5cb46c"/><rect x="8" y="1" width="3" height="2.5" fill="#4f8fd4"/><rect x="12" y="1" width="3" height="2.5" fill="#4f8fd4"/><rect x="8" y="4.7" width="7" height="2.5" fill="#4f8fd4"/><rect x="8" y="8.5" width="3" height="2.5" fill="#4f8fd4"/><rect x="12" y="8.5" width="3" height="2.5" fill="#4f8fd4"/></svg>
<svg style="position:absolute;left:106px;top:433.5px;" width="16" height="12" viewBox="0 0 16 12"><rect x="0" y="1" width="3" height="2.5" fill="#4f8fd4"/><rect x="4" y="1" width="3" height="2.5" fill="#4f8fd4"/><rect x="0" y="4.7" width="7" height="2.5" fill="#4f8fd4"/><rect x="0" y="8.5" width="3" height="2.5" fill="#4f8fd4"/><rect x="4" y="8.5" width="3" height="2.5" fill="#4f8fd4"/><rect x="8" y="5" width="4.5" height="1.6" fill="#5cb46c"/><path d="M12 3 L14.5 5.8 L12 8.6 Z" fill="#5cb46c"/></svg>
<svg style="position:absolute;left:130px;top:433.5px;" width="16" height="12" viewBox="0 0 16 12"><rect x="0" y="0.5" width="3" height="1.5" fill="#4f8fd4"/><rect x="12" y="0.5" width="3" height="1.5" fill="#4f8fd4"/><path d="M7.5 0 L10 2.5 L5 2.5 Z" fill="#5cb46c"/><rect x="6.7" y="2.5" width="1.6" height="2" fill="#5cb46c"/><rect x="0" y="5" width="15" height="2.5" fill="#4f8fd4"/><rect x="0" y="9" width="15" height="1.5" fill="#4f8fd4"/></svg>
<svg style="position:absolute;left:154px;top:433.5px;" width="16" height="12" viewBox="0 0 16 12"><rect x="0" y="0.5" width="15" height="1.5" fill="#4f8fd4"/><rect x="0" y="3.5" width="15" height="2.5" fill="#4f8fd4"/><rect x="0" y="9" width="3" height="1.5" fill="#4f8fd4"/><rect x="12" y="9" width="3" height="1.5" fill="#4f8fd4"/><rect x="6.7" y="6.5" width="1.6" height="2" fill="#5cb46c"/><path d="M7.5 11 L10 8.5 L5 8.5 Z" fill="#5cb46c"/></svg>
<div class="t" style="right:714px;top:432.0px;height:16px;line-height:16px;text-align:right;transform:scaleX(0.93);transform-origin:100% 0;">72,000.00</div>
<div class="t" style="right:573px;top:432.0px;height:16px;line-height:16px;text-align:right;transform:scaleX(0.93);transform-origin:100% 0;">9.50</div>
<div class="t" style="right:384px;top:432.0px;height:16px;line-height:16px;text-align:right;transform:scaleX(0.93);transform-origin:100% 0;">684,000.00</div>
<div class="t" style="right:304px;top:432.0px;height:16px;line-height:16px;text-align:right;transform:scaleX(0.93);transform-origin:100% 0;">3.75 %</div>
<div class="t" style="right:224px;top:432.0px;height:16px;line-height:16px;text-align:right;transform:scaleX(0.93);transform-origin:100% 0;">1.25 %</div>
<div class="t" style="right:144px;top:432.0px;height:16px;line-height:16px;text-align:right;transform:scaleX(0.93);transform-origin:100% 0;">0.00 %</div>
<div class="t" style="right:14px;top:432.0px;height:16px;line-height:16px;text-align:right;transform:scaleX(0.93);transform-origin:100% 0;">0.00</div>
<div class="t" style="left:8px;top:473.5px;height:20px;line-height:20px;font-size:16px;font-weight:bold;transform:scaleX(0.9271);transform-origin:0 0;color:#a0481f">Port Rotation</div>
<div style="left:113px;top:476px;width:14px;height:14px;border:1px solid #cfcfcf;background:#fff"></div>
<svg style="position:absolute;left:115.5px;top:479px;" width="9" height="7" viewBox="0 0 9 7"><polyline points="0.6,3.5 3.2,6.2 8.4,0.6" fill="none" stroke="#333" stroke-width="1.3"/></svg>
<div class="t" style="left:130.5px;top:475.5px;height:16px;line-height:16px;font-size:12px;transform:scaleX(0.8281);transform-origin:0 0;color:#444">SUEZ</div>
<div style="left:168px;top:476px;width:14px;height:14px;border:1px solid #cfcfcf;background:#fff"></div>
<svg style="position:absolute;left:171.0px;top:479px;" width="9" height="7" viewBox="0 0 9 7"><polyline points="0.6,3.5 3.2,6.2 8.4,0.6" fill="none" stroke="#333" stroke-width="1.3"/></svg>
<div class="t" style="left:186.4px;top:475.5px;height:16px;line-height:16px;font-size:12px;transform:scaleX(0.9702);transform-origin:0 0;color:#444">PANAMA</div>
<div style="left:245px;top:476px;width:14px;height:14px;border:1px solid #cfcfcf;background:#fff"></div>
<div class="t" style="left:263px;top:475.5px;height:16px;line-height:16px;font-size:12px;transform:scaleX(0.8308);transform-origin:0 0;color:#444">KIEL</div>
<div class="t" style="left:305.3px;top:475.5px;height:16px;line-height:16px;font-size:12px;font-weight:bold;transform:scaleX(1.0032);transform-origin:0 0;color:#333">Total Duration: 23.28 (ECA: 0) Days (Ballast: 5.87, Laden: 6.61, Port: 10.80) / (Port local time) 2025-07-10 08:00 ~ 2025-08-02 14:39</div>
<div style="left:8px;top:497px;width:1484px;height:21px;background:#f3f3f3"></div>
<div style="left:30px;top:518px;width:72px;height:21px;background:#eff3fc"></div>
<div style="left:102px;top:518px;width:247px;height:21px;background:#f6fbf8"></div>
<div style="left:399px;top:518px;width:25px;height:21px;background:#eff3fc"></div>
<div style="left:424px;top:518px;width:69px;height:21px;background:#eff3fc"></div>
<div style="left:493px;top:518px;width:70px;height:21px;background:#eff3fc"></div>
<div style="left:563px;top:518px;width:50px;height:21px;background:#eff3fc"></div>
<div style="left:613px;top:518px;width:45px;height:21px;background:#eff3fc"></div>
<div style="left:658px;top:518px;width:62px;height:21px;background:#eff3fc"></div>
<div style="left:720px;top:518px;width:99px;height:21px;background:#eff3fc"></div>
<div style="left:819px;top:518px;width:62px;height:21px;background:#eff3fc"></div>
<div style="left:881px;top:518px;width:62px;height:21px;background:#eff3fc"></div>
<div style="left:943px;top:518px;width:25px;height:21px;background:#eff3fc"></div>
<div style="left:968px;top:518px;width:85px;height:21px;background:#eff3fc"></div>
<div style="left:1053px;top:518px;width:84px;height:21px;background:#eff3fc"></div>
<div style="left:1137px;top:518px;width:95px;height:21px;background:#eff3fc"></div>
<div style="left:1232px;top:518px;width:130px;height:21px;background:#eff3fc"></div>
<div style="left:1362px;top:518px;width:130px;height:21px;background:#eff3fc"></div>
<div style="left:30px;top:539px;width:72px;height:21px;background:#eff3fc"></div>
<div style="left:424px;top:539px;width:69px;height:21px;background:#fffde3"></div>
<div style="left:493px;top:539px;width:70px;height:21px;background:#fffde3"></div>
<div style="left:658px;top:539px;width:62px;height:21px;background:#fffde3"></div>
<div style="left:819px;top:539px;width:62px;height:21px;background:#fffde3"></div>
<div style="left:881px;top:539px;width:62px;height:21px;background:#fffde3"></div>
<div style="left:968px;top:539px;width:85px;height:21px;background:#fffde3"></div>
<div style="left:1053px;top:539px;width:84px;height:21px;background:#fffde3"></div>
<div style="left:1232px;top:539px;width:130px;height:21px;background:#fffde3"></div>
<div style="left:1362px;top:539px;width:130px;height:21px;background:#fffde3"></div>
<div style="left:8px;top:560px;width:22px;height:21px;background:#d6e6f5"></div>
<div style="left:30px;top:560px;width:72px;height:21px;background:#eff3fc"></div>
<div style="left:424px;top:560px;width:69px;height:21px;background:#fffde3"></div>
<div style="left:493px;top:560px;width:70px;height:21px;background:#fffde3"></div>
<div style="left:658px;top:560px;width:62px;height:21px;background:#fffde3"></div>
<div style="left:819px;top:560px;width:62px;height:21px;background:#fffde3"></div>
<div style="left:881px;top:560px;width:62px;height:21px;background:#fffde3"></div>
<div style="left:968px;top:560px;width:85px;height:21px;background:#fffde3"></div>
<div style="left:1053px;top:560px;width:84px;height:21px;background:#fffde3"></div>
<div style="left:1232px;top:560px;width:130px;height:21px;background:#fffde3"></div>
<div style="left:1362px;top:560px;width:130px;height:21px;background:#fffde3"></div>
<div style="left:349px;top:581px;width:25px;height:21px;background:#eff3fc"></div>
<div style="left:374px;top:581px;width:25px;height:21px;background:#eff3fc"></div>
<div style="left:399px;top:581px;width:25px;height:21px;background:#eff3fc"></div>
<div style="left:424px;top:581px;width:69px;height:21px;background:#eff3fc"></div>
<div style="left:493px;top:581px;width:70px;height:21px;background:#eff3fc"></div>
<div style="left:563px;top:581px;width:50px;height:21px;background:#eff3fc"></div>
<div style="left:613px;top:581px;width:45px;height:21px;background:#eff3fc"></div>
<div style="left:658px;top:581px;width:62px;height:21px;background:#eff3fc"></div>
<div style="left:720px;top:581px;width:99px;height:21px;background:#eff3fc"></div>
<div style="left:819px;top:581px;width:62px;height:21px;background:#eff3fc"></div>
<div style="left:881px;top:581px;width:62px;height:21px;background:#eff3fc"></div>
<div style="left:943px;top:581px;width:25px;height:21px;background:#eff3fc"></div>
<div style="left:968px;top:581px;width:85px;height:21px;background:#eff3fc"></div>
<div style="left:1053px;top:581px;width:84px;height:21px;background:#eff3fc"></div>
<div style="left:1137px;top:581px;width:95px;height:21px;background:#eff3fc"></div>
<div style="left:1232px;top:581px;width:130px;height:21px;background:#eff3fc"></div>
<div style="left:1362px;top:581px;width:130px;height:21px;background:#eff3fc"></div>
<div style="left:349px;top:602px;width:25px;height:21px;background:#eff3fc"></div>
<div style="left:374px;top:602px;width:25px;height:21px;background:#eff3fc"></div>
<div style="left:399px;top:602px;width:25px;height:21px;background:#eff3fc"></div>
<div style="left:424px;top:602px;width:69px;height:21px;background:#eff3fc"></div>
<div style="left:493px;top:602px;width:70px;height:21px;background:#eff3fc"></div>
<div style="left:563px;top:602px;width:50px;height:21px;background:#eff3fc"></div>
<div style="left:613px;top:602px;width:45px;height:21px;background:#eff3fc"></div>
<div style="left:658px;top:602px;width:62px;height:21px;background:#eff3fc"></div>
<div style="left:720px;top:602px;width:99px;height:21px;background:#eff3fc"></div>
<div style="left:819px;top:602px;width:62px;height:21px;background:#eff3fc"></div>
<div style="left:881px;top:602px;width:62px;height:21px;background:#eff3fc"></div>
<div style="left:943px;top:602px;width:25px;height:21px;background:#eff3fc"></div>
<div style="left:968px;top:602px;width:85px;height:21px;background:#eff3fc"></div>
<div style="left:1053px;top:602px;width:84px;height:21px;background:#eff3fc"></div>
<div style="left:1137px;top:602px;width:95px;height:21px;background:#eff3fc"></div>
<div style="left:1232px;top:602px;width:130px;height:21px;background:#eff3fc"></div>
<div style="left:1362px;top:602px;width:130px;height:21px;background:#eff3fc"></div>
<div style="left:30px;top:623px;width:72px;height:21px;background:#eff3fc"></div>
<div style="left:102px;top:623px;width:247px;height:21px;background:#eff3fc"></div>
<div style="left:349px;top:623px;width:25px;height:21px;background:#eff3fc"></div>
<div style="left:374px;top:623px;width:25px;height:21px;background:#eff3fc"></div>
<div style="left:399px;top:623px;width:25px;height:21px;background:#eff3fc"></div>
<div style="left:424px;top:623px;width:69px;height:21px;background:#eff3fc"></div>
<div style="left:493px;top:623px;width:70px;height:21px;background:#eff3fc"></div>
<div style="left:563px;top:623px;width:50px;height:21px;background:#eff3fc"></div>
<div style="left:613px;top:623px;width:45px;height:21px;background:#eff3fc"></div>
<div style="left:720px;top:623px;width:99px;height:21px;background:#eff3fc"></div>
<div style="left:943px;top:623px;width:25px;height:21px;background:#eff3fc"></div>
<div style="left:968px;top:623px;width:85px;height:21px;background:#eff3fc"></div>
<div style="left:1053px;top:623px;width:84px;height:21px;background:#eff3fc"></div>
<div style="left:1137px;top:623px;width:95px;height:21px;background:#eff3fc"></div>
<div style="left:1232px;top:623px;width:130px;height:21px;background:#eff3fc"></div>
<div style="left:1362px;top:623px;width:130px;height:21px;background:#eff3fc"></div>
<div style="left:8px;top:497px;width:1485px;height:1px;background:#dcdcdc"></div>
<div style="left:8px;top:518px;width:1485px;height:1px;background:#dcdcdc"></div>
<div style="left:8px;top:539px;width:1485px;height:1px;background:#dcdcdc"></div>
<div style="left:8px;top:560px;width:1485px;height:1px;background:#dcdcdc"></div>
<div style="left:8px;top:581px;width:1485px;height:1px;background:#dcdcdc"></div>
<div style="left:8px;top:602px;width:1485px;height:1px;background:#dcdcdc"></div>
<div style="left:8px;top:623px;width:1485px;height:1px;background:#dcdcdc"></div>
<div style="left:8px;top:644px;width:1485px;height:1px;background:#dcdcdc"></div>
<div style="left:8px;top:518px;width:1px;height:126px;background:#dcdcdc"></div>
<div style="left:30px;top:518px;width:1px;height:126px;background:#dcdcdc"></div>
<div style="left:102px;top:518px;width:1px;height:126px;background:#dcdcdc"></div>
<div style="left:349px;top:518px;width:1px;height:126px;background:#dcdcdc"></div>
<div style="left:374px;top:518px;width:1px;height:126px;background:#dcdcdc"></div>
<div style="left:399px;top:518px;width:1px;height:126px;background:#dcdcdc"></div>
<div style="left:424px;top:518px;width:1px;height:126px;background:#dcdcdc"></div>
<div style="left:493px;top:518px;width:1px;height:126px;background:#dcdcdc"></div>
<div style="left:563px;top:518px;width:1px;height:126px;background:#dcdcdc"></div>
<div style="left:613px;top:518px;width:1px;height:126px;background:#dcdcdc"></div>
<div style="left:658px;top:518px;width:1px;height:126px;background:#dcdcdc"></div>
<div style="left:720px;top:518px;width:1px;height:126px;background:#dcdcdc"></div>
<div style="left:819px;top:518px;width:1px;height:126px;background:#dcdcdc"></div>
<div style="left:881px;top:518px;width:1px;height:126px;background:#dcdcdc"></div>
<div style="left:943px;top:518px;width:1px;height:126px;background:#dcdcdc"></div>
<div style="left:968px;top:518px;width:1px;height:126px;background:#dcdcdc"></div>
<div style="left:1053px;top:518px;width:1px;height:126px;background:#dcdcdc"></div>
<div style="left:1137px;top:518px;width:1px;height:126px;background:#dcdcdc"></div>
<div style="left:1232px;top:518px;width:1px;height:126px;background:#dcdcdc"></div>
<div style="left:1362px;top:518px;width:1px;height:126px;background:#dcdcdc"></div>
<div style="left:1492px;top:518px;width:1px;height:126px;background:#dcdcdc"></div>
<div style="left:8px;top:497px;width:1px;height:21px;background:#dcdcdc"></div>
<div style="left:30px;top:497px;width:1px;height:21px;background:#dcdcdc"></div>
<div style="left:102px;top:497px;width:1px;height:21px;background:#dcdcdc"></div>
<div style="left:424px;top:497px;width:1px;height:21px;background:#dcdcdc"></div>
<div style="left:563px;top:497px;width:1px;height:21px;background:#dcdcdc"></div>
<div style="left:613px;top:497px;width:1px;height:21px;background:#dcdcdc"></div>
<div style="left:658px;top:497px;width:1px;height:21px;background:#dcdcdc"></div>
<div style="left:720px;top:497px;width:1px;height:21px;background:#dcdcdc"></div>
<div style="left:819px;top:497px;width:1px;height:21px;background:#dcdcdc"></div>
<div style="left:968px;top:497px;width:1px;height:21px;background:#dcdcdc"></div>
<div style="left:1053px;top:497px;width:1px;height:21px;background:#dcdcdc"></div>
<div style="left:1137px;top:497px;width:1px;height:21px;background:#dcdcdc"></div>
<div style="left:1232px;top:497px;width:1px;height:21px;background:#dcdcdc"></div>
<div style="left:1362px;top:497px;width:1px;height:21px;background:#dcdcdc"></div>
<div style="left:1492px;top:497px;width:1px;height:147px;background:#dcdcdc"></div>
<div style="left:8px;top:643px;width:1485px;height:1px;background:#cfcfcf"></div>
<div style="left:8px;top:644px;width:1485px;height:34px;border:1px solid #dcdcdc;border-top:none"></div>
<div style="left:8px;top:538px;width:1485px;height:2px;background:#1f7fe0"></div>
<div class="t" style="left:-83.5px;top:500.5px;width:300px;height:16px;line-height:16px;text-align:center;transform:scaleX(0.965);transform-origin:50% 0;color:#444">Type</div>
<div class="t" style="left:113.25px;top:500.5px;width:300px;height:16px;line-height:16px;text-align:center;color:#333;font-weight:bold">Port Name or Coordinates</div>
<div class="t" style="left:343.5px;top:500.5px;width:300px;height:16px;line-height:16px;text-align:center;transform:scaleX(0.965);transform-origin:50% 0;color:#444">Distance (TTL / ECA)</div>
<div class="t" style="left:438.25px;top:500.5px;width:300px;height:16px;line-height:16px;text-align:center;transform:scaleX(0.965);transform-origin:50% 0;color:#444">W.F</div>
<div class="t" style="left:486.0px;top:500.5px;width:300px;height:16px;line-height:16px;text-align:center;transform:scaleX(0.965);transform-origin:50% 0;color:#444">Spd</div>
<div class="t" style="left:539.5px;top:500.5px;width:300px;height:16px;line-height:16px;text-align:center;transform:scaleX(0.965);transform-origin:50% 0;color:#444">Sea</div>
<div class="t" style="left:619.75px;top:500.5px;width:300px;height:16px;line-height:16px;text-align:center;transform:scaleX(0.965);transform-origin:50% 0;color:#444">L / D Rate</div>
<div class="t" style="left:743.5px;top:500.5px;width:300px;height:16px;line-height:16px;text-align:center;transform:scaleX(0.965);transform-origin:50% 0;color:#444">Port (I / W)</div>
<div class="t" style="left:860.5px;top:500.5px;width:300px;height:16px;line-height:16px;text-align:center;transform:scaleX(0.965);transform-origin:50% 0;color:#444">Dem</div>
<div class="t" style="left:945.25px;top:500.5px;width:300px;height:16px;line-height:16px;text-align:center;transform:scaleX(0.965);transform-origin:50% 0;color:#444">Des</div>
<div class="t" style="left:1034.75px;top:500.5px;width:300px;height:16px;line-height:16px;text-align:center;transform:scaleX(0.965);transform-origin:50% 0;color:#444">Port Charge</div>
<div class="t" style="left:1147.0px;top:500.5px;width:300px;height:16px;line-height:16px;text-align:center;transform:scaleX(0.965);transform-origin:50% 0;color:#444">Arrival</div>
<div class="t" style="left:1277.25px;top:500.5px;width:300px;height:16px;line-height:16px;text-align:center;transform:scaleX(0.965);transform-origin:50% 0;color:#444">Departure</div>
<div class="t" style="left:9.5px;top:521.0px;width:20px;height:16px;line-height:16px;text-align:center;transform:scaleX(0.93);transform-origin:50% 0;color:#444">1</div>
<div class="t" style="left:9.5px;top:542.0px;width:20px;height:16px;line-height:16px;text-align:center;transform:scaleX(0.93);transform-origin:50% 0;color:#444">2</div>
<div class="t" style="left:9.5px;top:563.0px;width:20px;height:16px;line-height:16px;text-align:center;transform:scaleX(0.93);transform-origin:50% 0;color:#444">3</div>
<div class="t" style="left:9.5px;top:584.0px;width:20px;height:16px;line-height:16px;text-align:center;transform:scaleX(0.93);transform-origin:50% 0;color:#444">4</div>
<div class="t" style="left:9.5px;top:605.0px;width:20px;height:16px;line-height:16px;text-align:center;transform:scaleX(0.93);transform-origin:50% 0;color:#444">5</div>
<div class="t" style="left:34.5px;top:521.0px;height:16px;line-height:16px;transform:scaleX(0.965);transform-origin:0 0;">Ballast</div>
<div class="t" style="left:34.5px;top:542.0px;height:16px;line-height:16px;transform:scaleX(0.965);transform-origin:0 0;">Loading</div>
<div class="t" style="left:34.5px;top:563.0px;height:16px;line-height:16px;transform:scaleX(0.965);transform-origin:0 0;">Dischg.</div>
<div class="t" style="left:34.5px;top:626.0px;height:16px;line-height:16px;transform:scaleX(0.965);transform-origin:0 0;color:#444">Margin</div>
<div class="t" style="left:106.5px;top:521.0px;height:16px;line-height:16px;font-size:12px;transform:scaleX(1.0145);transform-origin:0 0;">Hongkong &lt;China Hongkong&gt; [+08:00]</div>
<div class="t" style="left:106.5px;top:542.0px;height:16px;line-height:16px;font-size:12px;transform:scaleX(0.9894);transform-origin:0 0;">Tanjung Pemancingan &lt;Indonesia&gt;...</div>
<div class="t" style="left:106.5px;top:563.0px;height:16px;line-height:16px;font-size:12px;transform:scaleX(0.9969);transform-origin:0 0;">Xiamen &lt;China&gt; [+08:00]</div>
<svg style="position:absolute;left:330.5px;top:521.5px;" width="14" height="14" viewBox="0 0 14 14"><circle cx="7" cy="7" r="6.5" fill="#3f87d6"/><rect x="6" y="6" width="2.2" height="5" fill="#fff"/><circle cx="7.1" cy="3.9" r="1.2" fill="#fff"/></svg>
<svg style="position:absolute;left:330.5px;top:542.5px;" width="14" height="14" viewBox="0 0 14 14"><circle cx="7" cy="7" r="6.5" fill="#3f87d6"/><rect x="6" y="6" width="2.2" height="5" fill="#fff"/><circle cx="7.1" cy="3.9" r="1.2" fill="#fff"/></svg>
<svg style="position:absolute;left:330.5px;top:563.5px;" width="14" height="14" viewBox="0 0 14 14"><circle cx="7" cy="7" r="6.5" fill="#3f87d6"/><rect x="6" y="6" width="2.2" height="5" fill="#fff"/><circle cx="7.1" cy="3.9" r="1.2" fill="#fff"/></svg>
<svg style="position:absolute;left:310.5px;top:543.0px;" width="14" height="14" viewBox="0 0 14 14"><circle cx="5.6" cy="5.6" r="4.6" fill="none" stroke="#555" stroke-width="1.15"/><line x1="8.9" y1="8.9" x2="12.6" y2="12.6" stroke="#555" stroke-width="1.5" stroke-linecap="round"/></svg>
<svg style="position:absolute;left:310.5px;top:564.0px;" width="14" height="14" viewBox="0 0 14 14"><circle cx="5.6" cy="5.6" r="4.6" fill="none" stroke="#555" stroke-width="1.15"/><line x1="8.9" y1="8.9" x2="12.6" y2="12.6" stroke="#555" stroke-width="1.5" stroke-linecap="round"/></svg>
<svg style="position:absolute;left:331px;top:585.0px;" width="13" height="13" viewBox="0 0 13 13"><path d="M2 12 L2.6 9.4 L9.6 2.4 L11.6 4.4 L4.6 11.4 Z" fill="#3f87d6"/><path d="M10.3 1.7 L11.1 0.9 L13.1 2.9 L12.3 3.7 Z" fill="#3f87d6"/></svg>
<svg style="position:absolute;left:382px;top:522.0px;" width="11" height="13" viewBox="0 0 11 13"><path d="M5.2 12.8 C2 8.8 0.3 6.8 0.3 4.9 A4.9 4.9 0 0 1 10.1 4.9 C10.1 6.8 8.4 8.8 5.2 12.8 Z" fill="#d3d6db"/><circle cx="5.2" cy="5" r="2.3" fill="#fff"/></svg>
<svg style="position:absolute;left:382px;top:543.0px;" width="11" height="13" viewBox="0 0 11 13"><path d="M5.2 12.8 C2 8.8 0.3 6.8 0.3 4.9 A4.9 4.9 0 0 1 10.1 4.9 C10.1 6.8 8.4 8.8 5.2 12.8 Z" fill="#d3d6db"/><circle cx="5.2" cy="5" r="2.3" fill="#fff"/></svg>
<svg style="position:absolute;left:382px;top:564.0px;" width="11" height="13" viewBox="0 0 11 13"><path d="M5.2 12.8 C2 8.8 0.3 6.8 0.3 4.9 A4.9 4.9 0 0 1 10.1 4.9 C10.1 6.8 8.4 8.8 5.2 12.8 Z" fill="#d3d6db"/><circle cx="5.2" cy="5" r="2.3" fill="#fff"/></svg>
<svg style="position:absolute;left:353.3px;top:545.0px;" width="16" height="13" viewBox="0 0 16 13"><g fill="none" stroke="#4f8fd4" stroke-width="1.3"><circle cx="2.6" cy="10.4" r="2"/><circle cx="8.1" cy="5.4" r="2"/><circle cx="13.6" cy="0.4" r="2"/></g><g fill="none" stroke="#4f8fd4" stroke-width="0.7" opacity="0.6"><polyline points="2.6,8.3 2.6,6.5 6,6.5"/><polyline points="10.2,5.4 13.6,5.4 13.6,2.5"/></g></svg>
<svg style="position:absolute;left:353.3px;top:566.0px;" width="16" height="13" viewBox="0 0 16 13"><g fill="none" stroke="#c0c0c0" stroke-width="1.3"><circle cx="2.6" cy="10.4" r="2"/><circle cx="8.1" cy="5.4" r="2"/><circle cx="13.6" cy="0.4" r="2"/></g><g fill="none" stroke="#c0c0c0" stroke-width="0.7" opacity="0.6"><polyline points="2.6,8.3 2.6,6.5 6,6.5"/><polyline points="10.2,5.4 13.6,5.4 13.6,2.5"/></g></svg>
<svg style="position:absolute;left:403.5px;top:542.5px;" width="16" height="12" viewBox="0 0 16 12"><g fill="none" stroke="#a8a8a8" stroke-width="1.1"><path d="M0.8 10.8 L0.8 8.3 A7.2 7.2 0 0 1 15.2 8.3 L15.2 10.8 Z"/><path d="M3 9 A5 5 0 0 1 13 9"/></g><line x1="7.5" y1="8.5" x2="10.5" y2="5" stroke="#888" stroke-width="1.3"/><circle cx="7.6" cy="8.5" r="1" fill="#888"/><rect x="11.6" y="7.5" width="1" height="2" fill="#999"/></svg>
<svg style="position:absolute;left:403.5px;top:563.5px;" width="16" height="12" viewBox="0 0 16 12"><g fill="none" stroke="#a8a8a8" stroke-width="1.1"><path d="M0.8 10.8 L0.8 8.3 A7.2 7.2 0 0 1 15.2 8.3 L15.2 10.8 Z"/><path d="M3 9 A5 5 0 0 1 13 9"/></g><line x1="7.5" y1="8.5" x2="10.5" y2="5" stroke="#888" stroke-width="1.3"/><circle cx="7.6" cy="8.5" r="1" fill="#888"/><rect x="11.6" y="7.5" width="1" height="2" fill="#999"/></svg>
<div class="t" style="right:1012.5px;top:542.0px;height:16px;line-height:16px;text-align:right;transform:scaleX(0.93);transform-origin:100% 0;">1,738</div>
<div class="t" style="right:942px;top:542.0px;height:16px;line-height:16px;text-align:right;transform:scaleX(0.93);transform-origin:100% 0;">0</div>
<div class="t" style="right:892.5px;top:542.0px;height:16px;line-height:16px;text-align:right;transform:scaleX(0.93);transform-origin:100% 0;color:#e8202a">5.3 %</div>
<div class="t" style="right:847.5px;top:542.0px;height:16px;line-height:16px;text-align:right;transform:scaleX(0.93);transform-origin:100% 0;">13.00</div>
<div class="t" style="right:785.5px;top:542.0px;height:16px;line-height:16px;text-align:right;transform:scaleX(0.93);transform-origin:100% 0;">5.87</div>
<svg style="position:absolute;left:723px;top:543.0px;" width="14" height="14" viewBox="0 0 14 14"><circle cx="5.6" cy="5.6" r="4.6" fill="none" stroke="#555" stroke-width="1.15"/><line x1="8.9" y1="8.9" x2="12.6" y2="12.6" stroke="#555" stroke-width="1.5" stroke-linecap="round"/></svg>
<div class="t" style="right:687px;top:542.0px;height:16px;line-height:16px;text-align:right;transform:scaleX(0.93);transform-origin:100% 0;">15,000.00</div>
<div class="t" style="right:624.5px;top:542.0px;height:16px;line-height:16px;text-align:right;transform:scaleX(0.93);transform-origin:100% 0;">0.50</div>
<div class="t" style="right:563px;top:542.0px;height:16px;line-height:16px;text-align:right;transform:scaleX(0.93);transform-origin:100% 0;">4.80</div>
<svg style="position:absolute;left:947px;top:541.5px;" width="17" height="16" viewBox="0 0 17 16"><g fill="none" stroke="#b3b3b3" stroke-width="1.5"><polyline points="1.2,5.5 6.8,1.3 15.3,5"/><line x1="6.8" y1="1.3" x2="6.8" y2="14.6"/><line x1="4" y1="14.6" x2="9.8" y2="14.6"/><line x1="1.2" y1="3.8" x2="1.2" y2="7"/><path d="M13.6 5.5 L14.6 6.5 Q15.8 8.5 14 10 Q12.5 10.5 12 9.3"/></g><g stroke="#b3b3b3" stroke-width="1"><line x1="4" y1="3" x2="4" y2="5"/><line x1="9.5" y1="2.5" x2="9.5" y2="4.5"/></g></svg>
<div class="t" style="right:1012.5px;top:563.0px;height:16px;line-height:16px;text-align:right;transform:scaleX(0.93);transform-origin:100% 0;">1,809</div>
<div class="t" style="right:942px;top:563.0px;height:16px;line-height:16px;text-align:right;transform:scaleX(0.93);transform-origin:100% 0;">0</div>
<div class="t" style="right:892.5px;top:563.0px;height:16px;line-height:16px;text-align:right;transform:scaleX(0.93);transform-origin:100% 0;color:#e8202a">5.3 %</div>
<div class="t" style="right:847.5px;top:563.0px;height:16px;line-height:16px;text-align:right;transform:scaleX(0.93);transform-origin:100% 0;">12.00</div>
<div class="t" style="right:785.5px;top:563.0px;height:16px;line-height:16px;text-align:right;transform:scaleX(0.93);transform-origin:100% 0;">6.61</div>
<svg style="position:absolute;left:723px;top:564.0px;" width="14" height="14" viewBox="0 0 14 14"><circle cx="5.6" cy="5.6" r="4.6" fill="none" stroke="#555" stroke-width="1.15"/><line x1="8.9" y1="8.9" x2="12.6" y2="12.6" stroke="#555" stroke-width="1.5" stroke-linecap="round"/></svg>
<div class="t" style="right:687px;top:563.0px;height:16px;line-height:16px;text-align:right;transform:scaleX(0.93);transform-origin:100% 0;">18,000.00</div>
<div class="t" style="right:624.5px;top:563.0px;height:16px;line-height:16px;text-align:right;transform:scaleX(0.93);transform-origin:100% 0;">0.50</div>
<div class="t" style="right:563px;top:563.0px;height:16px;line-height:16px;text-align:right;transform:scaleX(0.93);transform-origin:100% 0;">4.00</div>
<svg style="position:absolute;left:947px;top:562.5px;" width="17" height="16" viewBox="0 0 17 16"><g fill="none" stroke="#b3b3b3" stroke-width="1.5"><polyline points="1.2,5.5 6.8,1.3 15.3,5"/><line x1="6.8" y1="1.3" x2="6.8" y2="14.6"/><line x1="4" y1="14.6" x2="9.8" y2="14.6"/><line x1="1.2" y1="3.8" x2="1.2" y2="7"/><path d="M13.6 5.5 L14.6 6.5 Q15.8 8.5 14 10 Q12.5 10.5 12 9.3"/></g><g stroke="#b3b3b3" stroke-width="1"><line x1="4" y1="3" x2="4" y2="5"/><line x1="9.5" y1="2.5" x2="9.5" y2="4.5"/></g></svg>
<div class="t" style="right:368.5px;top:542.0px;height:16px;line-height:16px;text-align:right;transform:scaleX(0.93);transform-origin:100% 0;">12,750.00</div>
<svg style="position:absolute;left:1141px;top:543.0px;" width="14" height="14" viewBox="0 0 14 14"><circle cx="5.6" cy="5.6" r="4.6" fill="none" stroke="#555" stroke-width="1.15"/><line x1="8.9" y1="8.9" x2="12.6" y2="12.6" stroke="#555" stroke-width="1.5" stroke-linecap="round"/></svg>
<div class="t" style="right:274px;top:542.0px;height:16px;line-height:16px;text-align:right;transform:scaleX(0.93);transform-origin:100% 0;">20,000.00</div>
<div class="t" style="right:368.5px;top:563.0px;height:16px;line-height:16px;text-align:right;transform:scaleX(0.93);transform-origin:100% 0;">9,750.00</div>
<svg style="position:absolute;left:1141px;top:564.0px;" width="14" height="14" viewBox="0 0 14 14"><circle cx="5.6" cy="5.6" r="4.6" fill="none" stroke="#555" stroke-width="1.15"/><line x1="8.9" y1="8.9" x2="12.6" y2="12.6" stroke="#555" stroke-width="1.5" stroke-linecap="round"/></svg>
<div class="t" style="right:274px;top:563.0px;height:16px;line-height:16px;text-align:right;transform:scaleX(0.93);transform-origin:100% 0;">52,000.00</div>
<div class="t" style="left:1237px;top:542.0px;height:16px;line-height:16px;transform:scaleX(0.975);transform-origin:0 0;">2025-07-16 04:45</div>
<div class="t" style="left:1366px;top:542.0px;height:16px;line-height:16px;transform:scaleX(0.975);transform-origin:0 0;">2025-07-21 23:57</div>
<div class="t" style="left:1237px;top:563.0px;height:16px;line-height:16px;transform:scaleX(0.975);transform-origin:0 0;">2025-07-28 14:39</div>
<div class="t" style="left:1366px;top:563.0px;height:16px;line-height:16px;transform:scaleX(0.975);transform-origin:0 0;">2025-08-02 14:39</div>
<div class="t" style="left:1366px;top:521.0px;height:16px;line-height:16px;transform:scaleX(0.975);transform-origin:0 0;">2025-07-10 08:00</div>
<svg style="position:absolute;left:1344px;top:542.5px;" width="13" height="13" viewBox="0 0 13 13"><rect x="0.7" y="2" width="11.6" height="10.3" fill="#fff" stroke="#e03a3a" stroke-width="1.2"/><rect x="0.7" y="2" width="11.6" height="2.5" fill="#e03a3a"/><rect x="3" y="0" width="1.3" height="3" fill="#e03a3a"/><rect x="8.7" y="0" width="1.3" height="3" fill="#e03a3a"/><g fill="#e03a3a"><rect x="2.5" y="6" width="1.6" height="1.4"/><rect x="5.7" y="6" width="1.6" height="1.4"/><rect x="8.9" y="6" width="1.6" height="1.4"/><rect x="2.5" y="9" width="1.6" height="1.4"/><rect x="5.7" y="9" width="1.6" height="1.4"/><rect x="8.9" y="9" width="1.6" height="1.4"/></g></svg>
<svg style="position:absolute;left:1474px;top:521.5px;" width="13" height="13" viewBox="0 0 13 13"><rect x="0.7" y="2" width="11.6" height="10.3" fill="#fff" stroke="#e03a3a" stroke-width="1.2"/><rect x="0.7" y="2" width="11.6" height="2.5" fill="#e03a3a"/><rect x="3" y="0" width="1.3" height="3" fill="#e03a3a"/><rect x="8.7" y="0" width="1.3" height="3" fill="#e03a3a"/><g fill="#e03a3a"><rect x="2.5" y="6" width="1.6" height="1.4"/><rect x="5.7" y="6" width="1.6" height="1.4"/><rect x="8.9" y="6" width="1.6" height="1.4"/><rect x="2.5" y="9" width="1.6" height="1.4"/><rect x="5.7" y="9" width="1.6" height="1.4"/><rect x="8.9" y="9" width="1.6" height="1.4"/></g></svg>
<div style="left:658px;top:623px;width:62px;height:21px;background:#fff"></div>
<div style="left:819px;top:623px;width:124px;height:21px;background:#fff"></div>
<div style="left:658px;top:623px;width:1px;height:21px;background:#dcdcdc"></div>
<div style="left:720px;top:623px;width:1px;height:21px;background:#dcdcdc"></div>
<div style="left:819px;top:623px;width:1px;height:21px;background:#dcdcdc"></div>
<div style="left:881px;top:623px;width:1px;height:21px;background:#dcdcdc"></div>
<div style="left:943px;top:623px;width:1px;height:21px;background:#dcdcdc"></div>
<div style="left:8px;top:623px;width:1485px;height:1px;background:#dcdcdc"></div>
<div style="left:8px;top:643px;width:1485px;height:1px;background:#cfcfcf"></div>
<svg style="position:absolute;left:661px;top:627.0px;" width="14" height="14" viewBox="0 0 14 14"><circle cx="5.6" cy="5.6" r="4.6" fill="none" stroke="#555" stroke-width="1.15"/><line x1="8.9" y1="8.9" x2="12.6" y2="12.6" stroke="#555" stroke-width="1.5" stroke-linecap="round"/></svg>
<svg style="position:absolute;left:822px;top:627.0px;" width="14" height="14" viewBox="0 0 14 14"><circle cx="5.6" cy="5.6" r="4.6" fill="none" stroke="#555" stroke-width="1.15"/><line x1="8.9" y1="8.9" x2="12.6" y2="12.6" stroke="#555" stroke-width="1.5" stroke-linecap="round"/></svg>
<div class="t" style="right:624.5px;top:626.0px;height:16px;line-height:16px;text-align:right;transform:scaleX(0.93);transform-origin:100% 0;">1.00</div>
<svg style="position:absolute;left:884px;top:627.0px;" width="14" height="14" viewBox="0 0 14 14"><circle cx="5.6" cy="5.6" r="4.6" fill="none" stroke="#555" stroke-width="1.15"/><line x1="8.9" y1="8.9" x2="12.6" y2="12.6" stroke="#555" stroke-width="1.5" stroke-linecap="round"/></svg>
<div style="left:31px;top:651px;width:21px;height:19px;border:1px solid #d0d0d0;background:#fff"></div>
<div style="left:55px;top:651px;width:21px;height:19px;border:1px solid #d0d0d0;background:#fff"></div>
<div style="left:79px;top:651px;width:21px;height:19px;border:1px solid #d0d0d0;background:#fff"></div>
<div style="left:103px;top:651px;width:21px;height:19px;border:1px solid #d0d0d0;background:#fff"></div>
<div style="left:127px;top:651px;width:21px;height:19px;border:1px solid #d0d0d0;background:#fff"></div>
<div style="left:151px;top:651px;width:21px;height:19px;border:1px solid #d0d0d0;background:#fff"></div>
<svg style="position:absolute;left:36px;top:655.5px;" width="12" height="12" viewBox="0 0 12 12"><rect x="0.5" y="1.5" width="10" height="1.6" fill="#555"/><rect x="3.5" y="0" width="4" height="1.5" fill="#555"/><path d="M1.5 3.8 L9.5 3.8 L9 11.5 L2 11.5 Z" fill="#555"/></svg>
<svg style="position:absolute;left:60px;top:655.5px;" width="12" height="12" viewBox="0 0 12 12"><circle cx="6" cy="6" r="5.6" fill="#5cb46c"/><rect x="2.5" y="4.8" width="7.4" height="2.5" fill="#fff"/><rect x="4.75" y="2.5" width="2.5" height="7.4" fill="#fff"/></svg>
<svg style="position:absolute;left:82px;top:655.5px;" width="16" height="12" viewBox="0 0 16 12"><rect x="0" y="5" width="5" height="1.6" fill="#5cb46c"/><path d="M4.5 3 L7 5.8 L4.5 8.6 Z" fill="#5cb46c"/><rect x="8" y="1" width="3" height="2.5" fill="#4f8fd4"/><rect x="12" y="1" width="3" height="2.5" fill="#4f8fd4"/><rect x="8" y="4.7" width="7" height="2.5" fill="#4f8fd4"/><rect x="8" y="8.5" width="3" height="2.5" fill="#4f8fd4"/><rect x="12" y="8.5" width="3" height="2.5" fill="#4f8fd4"/></svg>
<svg style="position:absolute;left:106px;top:655.5px;" width="16" height="12" viewBox="0 0 16 12"><rect x="0" y="1" width="3" height="2.5" fill="#4f8fd4"/><rect x="4" y="1" width="3" height="2.5" fill="#4f8fd4"/><rect x="0" y="4.7" width="7" height="2.5" fill="#4f8fd4"/><rect x="0" y="8.5" width="3" height="2.5" fill="#4f8fd4"/><rect x="4" y="8.5" width="3" height="2.5" fill="#4f8fd4"/><rect x="8" y="5" width="4.5" height="1.6" fill="#5cb46c"/><path d="M12 3 L14.5 5.8 L12 8.6 Z" fill="#5cb46c"/></svg>
<svg style="position:absolute;left:130px;top:655.5px;" width="16" height="12" viewBox="0 0 16 12"><rect x="0" y="0.5" width="3" height="1.5" fill="#4f8fd4"/><rect x="12" y="0.5" width="3" height="1.5" fill="#4f8fd4"/><path d="M7.5 0 L10 2.5 L5 2.5 Z" fill="#5cb46c"/><rect x="6.7" y="2.5" width="1.6" height="2" fill="#5cb46c"/><rect x="0" y="5" width="15" height="2.5" fill="#4f8fd4"/><rect x="0" y="9" width="15" height="1.5" fill="#4f8fd4"/></svg>
<svg style="position:absolute;left:154px;top:655.5px;" width="16" height="12" viewBox="0 0 16 12"><rect x="0" y="0.5" width="15" height="1.5" fill="#4f8fd4"/><rect x="0" y="3.5" width="15" height="2.5" fill="#4f8fd4"/><rect x="0" y="9" width="3" height="1.5" fill="#4f8fd4"/><rect x="12" y="9" width="3" height="1.5" fill="#4f8fd4"/><rect x="6.7" y="6.5" width="1.6" height="2" fill="#5cb46c"/><path d="M7.5 11 L10 8.5 L5 8.5 Z" fill="#5cb46c"/></svg>
<div class="t" style="right:1012.5px;top:653.5px;height:16px;line-height:16px;text-align:right;font-weight:bold">3,548</div>
<div class="t" style="right:942px;top:653.5px;height:16px;line-height:16px;text-align:right;font-weight:bold">0</div>
<div class="t" style="right:785.5px;top:653.5px;height:16px;line-height:16px;text-align:right;transform:scaleX(0.93);transform-origin:100% 0;">12.48</div>
<div class="t" style="right:624.5px;top:653.5px;height:16px;line-height:16px;text-align:right;transform:scaleX(0.93);transform-origin:100% 0;">2.00</div>
<div class="t" style="right:563px;top:653.5px;height:16px;line-height:16px;text-align:right;transform:scaleX(0.93);transform-origin:100% 0;">8.80</div>
<div class="t" style="right:453px;top:653.5px;height:16px;line-height:16px;text-align:right;transform:scaleX(0.93);transform-origin:100% 0;">0.00</div>
<div class="t" style="right:368.5px;top:653.5px;height:16px;line-height:16px;text-align:right;transform:scaleX(0.93);transform-origin:100% 0;">22,500.00</div>
<div class="t" style="right:274px;top:653.5px;height:16px;line-height:16px;text-align:right;transform:scaleX(0.93);transform-origin:100% 0;">72,000.00</div>
<div class="t" style="left:1236.7px;top:653.5px;height:16px;line-height:16px;font-size:12px;font-weight:bold;transform:scaleX(1.0347);transform-origin:0 0;">2025-07-10 08:00</div>
<div class="t" style="left:1365.5px;top:653.5px;height:16px;line-height:16px;font-size:12px;font-weight:bold;transform:scaleX(1.0326);transform-origin:0 0;">2025-08-02 14:39</div>
<div style="left:8px;top:683px;width:117px;height:22px;background:#fff;border:1px solid #d0d0d0"></div>
<div class="t" style="left:-133.0px;top:687.0px;width:400px;height:16px;line-height:16px;text-align:center;font-weight:bold;color:#333">Get Distance (F9)</div>
<div style="left:131px;top:683px;width:118px;height:22px;background:#fff;border:1px solid #d0d0d0"></div>
<div class="t" style="left:-10.0px;top:687.0px;width:400px;height:16px;line-height:16px;text-align:center;font-weight:bold;color:#333">To Distance (F10)</div>
<div style="left:1118px;top:683px;width:59px;height:22px;background:#fff;border:1px solid #d0d0d0"></div>
<div class="t" style="left:1123px;top:687.0px;height:16px;line-height:16px;transform:scaleX(0.965);transform-origin:0 0;color:#444">Days</div>
<svg style="position:absolute;left:1164px;top:692px;" width="8" height="5" viewBox="0 0 8 5"><path d="M0 0 L8 0 L4 4.5 Z" fill="#444"/></svg>
<div style="left:1183px;top:683px;width:94px;height:22px;background:#93c0e3;border:1px solid #8fbce0"></div>
<svg style="position:absolute;left:1195px;top:687px;" width="14" height="14" viewBox="0 0 14 14"><circle cx="7.1" cy="7" r="6.9" fill="#5591d0"/><path d="M3 2.8 C4.5 1.5 6.5 1.2 8 1.6 C7.5 3 7 4 5.5 4.5 C4.5 4.6 3.5 4 3 2.8 Z" fill="#95c1e5"/><path d="M7 8.5 C8.3 8.7 9 9.5 8.8 11 C8.5 12 8 12.8 7.3 13 C6.8 11.5 6.2 10 7 8.5 Z" fill="#95c1e5"/></svg>
<div class="t" style="left:1215px;top:687.0px;height:16px;line-height:16px;transform:scaleX(0.965);transform-origin:0 0;color:#333">Port Local</div>
<div style="left:1283px;top:683px;width:85px;height:22px;background:#fff;border:1px solid #d0d0d0"></div>
<svg style="position:absolute;left:1294px;top:688px;" width="14" height="13" viewBox="0 0 14 13"><rect x="0.6" y="0.6" width="12.8" height="8.5" fill="none" stroke="#555" stroke-width="1.2"/><rect x="6" y="9.5" width="2" height="2" fill="#555"/><rect x="3.5" y="11.4" width="7" height="1.3" fill="#555"/></svg>
<div class="t" style="left:1314px;top:687.0px;height:16px;line-height:16px;transform:scaleX(0.965);transform-origin:0 0;color:#444">PC Time</div>
<div style="left:1373px;top:683px;width:120px;height:22px;background:#fff;border:1px solid #d0d0d0"></div>
<div class="t" style="left:1378px;top:687.0px;height:16px;line-height:16px;transform:scaleX(0.965);transform-origin:0 0;color:#444">Port local time</div>
<svg style="position:absolute;left:1479px;top:692px;" width="8" height="5" viewBox="0 0 8 5"><path d="M0 0 L8 0 L4 4.5 Z" fill="#444"/></svg>
<div class="t" style="left:8.5px;top:724.5px;height:20px;line-height:20px;font-size:16px;font-weight:bold;transform:scaleX(0.9011);transform-origin:0 0;color:#a0481f">Operation Expense</div>
<div style="left:9px;top:746px;width:121px;height:21px;background:#f3f3f3"></div>
<div style="left:130px;top:746px;width:132px;height:21px;background:#fffde3"></div>
<div style="left:262px;top:746px;width:121px;height:21px;background:#f3f3f3"></div>
<div style="left:383px;top:746px;width:132px;height:21px;background:#fffde3"></div>
<div style="left:9px;top:767px;width:121px;height:21px;background:#f3f3f3"></div>
<div style="left:130px;top:767px;width:132px;height:21px;background:#fffde3"></div>
<div style="left:262px;top:767px;width:121px;height:21px;background:#f3f3f3"></div>
<div style="left:383px;top:767px;width:132px;height:21px;background:#fffde3"></div>
<div style="left:9px;top:788px;width:121px;height:21px;background:#f3f3f3"></div>
<div style="left:130px;top:788px;width:132px;height:21px;background:#fffde3"></div>
<div style="left:262px;top:788px;width:121px;height:21px;background:#f3f3f3"></div>
<div style="left:383px;top:788px;width:132px;height:21px;background:#fff"></div>
<div style="left:9px;top:809px;width:121px;height:21px;background:#f3f3f3"></div>
<div style="left:130px;top:809px;width:132px;height:21px;background:#fffde3"></div>
<div style="left:262px;top:809px;width:121px;height:21px;background:#f3f3f3"></div>
<div style="left:383px;top:809px;width:132px;height:21px;background:#fff"></div>
<div style="left:9px;top:830px;width:121px;height:21px;background:#f3f3f3"></div>
<div style="left:130px;top:830px;width:132px;height:21px;background:#fffde3"></div>
<div style="left:262px;top:830px;width:121px;height:21px;background:#f3f3f3"></div>
<div style="left:383px;top:830px;width:132px;height:21px;background:#fffde3"></div>
<div style="left:9px;top:851px;width:121px;height:21px;background:#f3f3f3"></div>
<div style="left:130px;top:851px;width:132px;height:21px;background:#fffde3"></div>
<div style="left:262px;top:851px;width:121px;height:21px;background:#f3f3f3"></div>
<div style="left:383px;top:851px;width:132px;height:21px;background:#fffde3"></div>
<div style="left:9px;top:746px;width:1px;height:127px;background:#dcdcdc"></div>
<div style="left:130px;top:746px;width:1px;height:127px;background:#dcdcdc"></div>
<div style="left:262px;top:746px;width:1px;height:127px;background:#dcdcdc"></div>
<div style="left:383px;top:746px;width:1px;height:127px;background:#dcdcdc"></div>
<div style="left:515px;top:746px;width:1px;height:127px;background:#dcdcdc"></div>
<div style="left:9px;top:746px;width:507px;height:1px;background:#dcdcdc"></div>
<div style="left:9px;top:767px;width:507px;height:1px;background:#dcdcdc"></div>
<div style="left:9px;top:788px;width:507px;height:1px;background:#dcdcdc"></div>
<div style="left:9px;top:809px;width:507px;height:1px;background:#dcdcdc"></div>
<div style="left:9px;top:830px;width:507px;height:1px;background:#dcdcdc"></div>
<div style="left:9px;top:851px;width:507px;height:1px;background:#dcdcdc"></div>
<div style="left:9px;top:872px;width:507px;height:1px;background:#dcdcdc"></div>
<div style="left:9px;top:872px;width:507px;height:1px;background:#cfcfcf"></div>
<div class="t" style="left:13.5px;top:750.0px;height:16px;line-height:16px;transform:scaleX(0.965);transform-origin:0 0;">Dem/Des</div>
<svg style="position:absolute;left:133px;top:751.0px;" width="14" height="14" viewBox="0 0 14 14"><circle cx="5.6" cy="5.6" r="4.6" fill="none" stroke="#555" stroke-width="1.15"/><line x1="8.9" y1="8.9" x2="12.6" y2="12.6" stroke="#555" stroke-width="1.5" stroke-linecap="round"/></svg>
<div class="t" style="right:1244px;top:750.0px;height:16px;line-height:16px;text-align:right;transform:scaleX(0.93);transform-origin:100% 0;">22,500.00</div>
<div class="t" style="left:266px;top:750.0px;height:16px;line-height:16px;transform:scaleX(0.965);transform-origin:0 0;">Bunker Expense</div>
<svg style="position:absolute;left:386px;top:751.0px;" width="14" height="14" viewBox="0 0 14 14"><circle cx="5.6" cy="5.6" r="4.6" fill="none" stroke="#555" stroke-width="1.15"/><line x1="8.9" y1="8.9" x2="12.6" y2="12.6" stroke="#555" stroke-width="1.5" stroke-linecap="round"/></svg>
<div class="t" style="right:990.5px;top:750.0px;height:16px;line-height:16px;text-align:right;transform:scaleX(0.93);transform-origin:100% 0;">263,471.14</div>
<div class="t" style="left:13.5px;top:771.0px;height:16px;line-height:16px;transform:scaleX(0.965);transform-origin:0 0;">Add. Comm.</div>
<svg style="position:absolute;left:133px;top:772.0px;" width="14" height="14" viewBox="0 0 14 14"><circle cx="5.6" cy="5.6" r="4.6" fill="none" stroke="#555" stroke-width="1.15"/><line x1="8.9" y1="8.9" x2="12.6" y2="12.6" stroke="#555" stroke-width="1.5" stroke-linecap="round"/></svg>
<div class="t" style="right:1244px;top:771.0px;height:16px;line-height:16px;text-align:right;transform:scaleX(0.93);transform-origin:100% 0;">25,650.00</div>
<div class="t" style="left:266px;top:771.0px;height:16px;line-height:16px;transform:scaleX(0.965);transform-origin:0 0;">CEV</div>
<svg style="position:absolute;left:386px;top:772.0px;" width="14" height="14" viewBox="0 0 14 14"><circle cx="5.6" cy="5.6" r="4.6" fill="none" stroke="#555" stroke-width="1.15"/><line x1="8.9" y1="8.9" x2="12.6" y2="12.6" stroke="#555" stroke-width="1.5" stroke-linecap="round"/></svg>
<div class="t" style="right:990.5px;top:771.0px;height:16px;line-height:16px;text-align:right;transform:scaleX(0.93);transform-origin:100% 0;">1,163.87</div>
<div class="t" style="left:13.5px;top:792.0px;height:16px;line-height:16px;transform:scaleX(0.965);transform-origin:0 0;">Brokerage</div>
<svg style="position:absolute;left:133px;top:793.0px;" width="14" height="14" viewBox="0 0 14 14"><circle cx="5.6" cy="5.6" r="4.6" fill="none" stroke="#555" stroke-width="1.15"/><line x1="8.9" y1="8.9" x2="12.6" y2="12.6" stroke="#555" stroke-width="1.5" stroke-linecap="round"/></svg>
<div class="t" style="right:1244px;top:792.0px;height:16px;line-height:16px;text-align:right;transform:scaleX(0.93);transform-origin:100% 0;">8,550.00</div>
<div class="t" style="left:266px;top:792.0px;height:16px;line-height:16px;transform:scaleX(0.965);transform-origin:0 0;">ILOHC</div>
<svg style="position:absolute;left:386px;top:793.0px;" width="14" height="14" viewBox="0 0 14 14"><circle cx="5.6" cy="5.6" r="4.6" fill="none" stroke="#555" stroke-width="1.15"/><line x1="8.9" y1="8.9" x2="12.6" y2="12.6" stroke="#555" stroke-width="1.5" stroke-linecap="round"/></svg>
<div class="t" style="right:990.5px;top:792.0px;height:16px;line-height:16px;text-align:right;transform:scaleX(0.93);transform-origin:100% 0;">6,000.00</div>
<div class="t" style="left:13.5px;top:813.0px;height:16px;line-height:16px;transform:scaleX(0.965);transform-origin:0 0;">Freight Tax</div>
<svg style="position:absolute;left:133px;top:814.0px;" width="14" height="14" viewBox="0 0 14 14"><circle cx="5.6" cy="5.6" r="4.6" fill="none" stroke="#555" stroke-width="1.15"/><line x1="8.9" y1="8.9" x2="12.6" y2="12.6" stroke="#555" stroke-width="1.5" stroke-linecap="round"/></svg>
<div class="t" style="right:1244px;top:813.0px;height:16px;line-height:16px;text-align:right;transform:scaleX(0.93);transform-origin:100% 0;">0.00</div>
<div class="t" style="left:266px;top:813.0px;height:16px;line-height:16px;transform:scaleX(0.965);transform-origin:0 0;">Ballast Bonus</div>
<svg style="position:absolute;left:386px;top:814.0px;" width="14" height="14" viewBox="0 0 14 14"><circle cx="5.6" cy="5.6" r="4.6" fill="none" stroke="#555" stroke-width="1.15"/><line x1="8.9" y1="8.9" x2="12.6" y2="12.6" stroke="#555" stroke-width="1.5" stroke-linecap="round"/></svg>
<div class="t" style="right:990.5px;top:813.0px;height:16px;line-height:16px;text-align:right;"></div>
<div class="t" style="left:13.5px;top:833.75px;height:16px;line-height:16px;transform:scaleX(0.965);transform-origin:0 0;">Liner Terms</div>
<svg style="position:absolute;left:133px;top:834.75px;" width="14" height="14" viewBox="0 0 14 14"><circle cx="5.6" cy="5.6" r="4.6" fill="none" stroke="#555" stroke-width="1.15"/><line x1="8.9" y1="8.9" x2="12.6" y2="12.6" stroke="#555" stroke-width="1.5" stroke-linecap="round"/></svg>
<div class="t" style="right:1244px;top:833.75px;height:16px;line-height:16px;text-align:right;transform:scaleX(0.93);transform-origin:100% 0;">0.00</div>
<div class="t" style="left:266px;top:833.75px;height:16px;line-height:16px;transform:scaleX(0.965);transform-origin:0 0;">Emission Cost</div>
<svg style="position:absolute;left:386px;top:834.75px;" width="14" height="14" viewBox="0 0 14 14"><circle cx="5.6" cy="5.6" r="4.6" fill="none" stroke="#555" stroke-width="1.15"/><line x1="8.9" y1="8.9" x2="12.6" y2="12.6" stroke="#555" stroke-width="1.5" stroke-linecap="round"/></svg>
<div class="t" style="right:990.5px;top:833.75px;height:16px;line-height:16px;text-align:right;transform:scaleX(0.93);transform-origin:100% 0;">0.00</div>
<div class="t" style="left:13.5px;top:854.5px;height:16px;line-height:16px;transform:scaleX(0.965);transform-origin:0 0;">Port Charge</div>
<svg style="position:absolute;left:133px;top:855.5px;" width="14" height="14" viewBox="0 0 14 14"><circle cx="5.6" cy="5.6" r="4.6" fill="none" stroke="#555" stroke-width="1.15"/><line x1="8.9" y1="8.9" x2="12.6" y2="12.6" stroke="#555" stroke-width="1.5" stroke-linecap="round"/></svg>
<div class="t" style="right:1244px;top:854.5px;height:16px;line-height:16px;text-align:right;transform:scaleX(0.93);transform-origin:100% 0;">72,000.00</div>
<div class="t" style="left:266px;top:854.5px;height:16px;line-height:16px;transform:scaleX(0.965);transform-origin:0 0;">Others</div>
<svg style="position:absolute;left:386px;top:855.5px;" width="14" height="14" viewBox="0 0 14 14"><circle cx="5.6" cy="5.6" r="4.6" fill="none" stroke="#555" stroke-width="1.15"/><line x1="8.9" y1="8.9" x2="12.6" y2="12.6" stroke="#555" stroke-width="1.5" stroke-linecap="round"/></svg>
<div class="t" style="right:990.5px;top:854.5px;height:16px;line-height:16px;text-align:right;transform:scaleX(0.93);transform-origin:100% 0;">0.00</div>
<div class="t" style="left:526.5px;top:724.5px;height:20px;line-height:20px;font-size:16px;font-weight:bold;transform:scaleX(0.8846);transform-origin:0 0;color:#a0481f">Bunker Expense</div>
<div style="left:714px;top:722px;width:118px;height:22px;background:#fff;border:1px solid #d5d5d5"></div>
<svg style="position:absolute;left:722px;top:722px;" width="22" height="22" viewBox="0 0 22 22"><polyline points="5.1,5.4 11.1,8.7 18.2,4.3" fill="none" stroke="#7cc48a" stroke-width="1.5"/><circle cx="5.1" cy="5.4" r="1.6" fill="#7cc48a"/><circle cx="11.1" cy="8.7" r="1.6" fill="#7cc48a"/><circle cx="18.2" cy="4.3" r="1.6" fill="#7cc48a"/><polyline points="5.1,10.3 11.1,12.6 18.2,10.3" fill="none" stroke="#5b9bd8" stroke-width="1.5"/><circle cx="5.1" cy="10.3" r="1.6" fill="#5b9bd8"/><circle cx="11.1" cy="12.6" r="1.6" fill="#5b9bd8"/><circle cx="18.2" cy="10.3" r="1.6" fill="#5b9bd8"/><polyline points="5.1,16.5 11.1,16.5 18.2,17.4" fill="none" stroke="#5e5e5e" stroke-width="1.5"/><circle cx="5.1" cy="16.5" r="1.6" fill="#5e5e5e"/><circle cx="11.1" cy="16.5" r="1.6" fill="#5e5e5e"/><circle cx="18.2" cy="17.4" r="1.6" fill="#5e5e5e"/></svg>
<div class="t" style="left:747px;top:726.0px;height:16px;line-height:16px;font-size:12px;font-weight:bold;transform:scaleX(0.9868);transform-origin:0 0;color:#333">Bunker Index</div>
<div style="left:834px;top:722px;width:141px;height:22px;background:#fff;border:1px solid #d5d5d5"></div>
<svg style="position:absolute;left:845px;top:725px;" width="15" height="16" viewBox="0 0 15 16"><rect x="0.7" y="0.7" width="10.5" height="13" fill="#fff" stroke="#595959" stroke-width="1.3"/><rect x="2.5" y="2.5" width="7" height="2.5" fill="#2f7ed8"/><g fill="#595959"><rect x="2.5" y="6.5" width="1.8" height="1.6"/><rect x="5.2" y="6.5" width="1.8" height="1.6"/><rect x="2.5" y="9.5" width="1.8" height="1.6"/></g><path d="M10.5 7 C11.5 9.5 14 10.5 14 12.5 A3.5 3.2 0 0 1 7 12.5 C7 10.5 9.5 9.5 10.5 7 Z" fill="#5e5e5e" stroke="#fff" stroke-width="0.7"/></svg>
<div class="t" style="left:866px;top:726.0px;height:16px;line-height:16px;font-size:12px;font-weight:bold;transform:scaleX(0.9800);transform-origin:0 0;color:#333">Bunker Simulator</div>
<div style="left:527px;top:746px;width:87px;height:21px;background:#f3f3f3"></div>
<div style="left:614px;top:746px;width:120px;height:21px;background:#f3f3f3"></div>
<div style="left:734px;top:746px;width:119px;height:21px;background:#f3f3f3"></div>
<div style="left:853px;top:746px;width:121px;height:21px;background:#f3f3f3"></div>
<div style="left:527px;top:767px;width:87px;height:21px;background:#f3f3f3"></div>
<div style="left:614px;top:767px;width:120px;height:21px;background:#fff"></div>
<div style="left:734px;top:767px;width:119px;height:21px;background:#fffde3"></div>
<div style="left:853px;top:767px;width:121px;height:21px;background:#fffde3"></div>
<div style="left:527px;top:788px;width:87px;height:21px;background:#f3f3f3"></div>
<div style="left:614px;top:788px;width:120px;height:21px;background:#fff"></div>
<div style="left:734px;top:788px;width:119px;height:21px;background:#fffde3"></div>
<div style="left:853px;top:788px;width:121px;height:21px;background:#fffde3"></div>
<div style="left:527px;top:809px;width:87px;height:21px;background:#f3f3f3"></div>
<div style="left:614px;top:809px;width:120px;height:21px;background:#fff"></div>
<div style="left:734px;top:809px;width:119px;height:21px;background:#fffde3"></div>
<div style="left:853px;top:809px;width:121px;height:21px;background:#fffde3"></div>
<div style="left:527px;top:746px;width:1px;height:85px;background:#dcdcdc"></div>
<div style="left:614px;top:746px;width:1px;height:85px;background:#dcdcdc"></div>
<div style="left:734px;top:746px;width:1px;height:85px;background:#dcdcdc"></div>
<div style="left:853px;top:746px;width:1px;height:85px;background:#dcdcdc"></div>
<div style="left:974px;top:746px;width:1px;height:85px;background:#dcdcdc"></div>
<div style="left:527px;top:746px;width:448px;height:1px;background:#dcdcdc"></div>
<div style="left:527px;top:767px;width:448px;height:1px;background:#dcdcdc"></div>
<div style="left:527px;top:788px;width:448px;height:1px;background:#dcdcdc"></div>
<div style="left:527px;top:809px;width:448px;height:1px;background:#dcdcdc"></div>
<div style="left:527px;top:830px;width:448px;height:1px;background:#dcdcdc"></div>
<div style="left:527px;top:830px;width:448px;height:1px;background:#cfcfcf"></div>
<div class="t" style="left:474.0px;top:750.0px;width:400px;height:16px;line-height:16px;text-align:center;transform:scaleX(0.965);transform-origin:50% 0;color:#444">Price / MT</div>
<div style="left:748px;top:750px;width:14px;height:14px;border:1px solid #b8b8b8;background:#fff"></div>
<svg style="position:absolute;left:751px;top:753.5px;" width="9" height="7" viewBox="0 0 9 7"><polyline points="0.6,3.5 3.2,6.2 8.4,0.6" fill="none" stroke="#333" stroke-width="1.3"/></svg>
<div class="t" style="left:770.5px;top:750.0px;height:16px;line-height:16px;transform:scaleX(0.965);transform-origin:0 0;color:#444">Consumption</div>
<div class="t" style="left:713.5px;top:750.0px;width:400px;height:16px;line-height:16px;text-align:center;transform:scaleX(0.965);transform-origin:50% 0;color:#444">Expense</div>
<div class="t" style="left:531px;top:771.0px;height:16px;line-height:16px;transform:scaleX(0.965);transform-origin:0 0;">VLSFO</div>
<div class="t" style="right:771.5px;top:771.0px;height:16px;line-height:16px;text-align:right;transform:scaleX(0.93);transform-origin:100% 0;">580.00</div>
<div class="t" style="right:652.5px;top:771.0px;height:16px;line-height:16px;text-align:right;transform:scaleX(0.93);transform-origin:100% 0;">450.28</div>
<div class="t" style="right:532px;top:771.0px;height:16px;line-height:16px;text-align:right;transform:scaleX(0.93);transform-origin:100% 0;">261,161.56</div>
<div class="t" style="left:531px;top:792.0px;height:16px;line-height:16px;transform:scaleX(0.965);transform-origin:0 0;">MGO</div>
<div class="t" style="right:771.5px;top:792.0px;height:16px;line-height:16px;text-align:right;transform:scaleX(0.93);transform-origin:100% 0;">720.00</div>
<div class="t" style="right:652.5px;top:792.0px;height:16px;line-height:16px;text-align:right;transform:scaleX(0.93);transform-origin:100% 0;">3.21</div>
<div class="t" style="right:532px;top:792.0px;height:16px;line-height:16px;text-align:right;transform:scaleX(0.93);transform-origin:100% 0;">2,309.58</div>
<div class="t" style="left:531px;top:813.0px;height:16px;line-height:16px;transform:scaleX(0.965);transform-origin:0 0;">ULSFO</div>
<div class="t" style="right:771.5px;top:813.0px;height:16px;line-height:16px;text-align:right;"></div>
<div class="t" style="right:652.5px;top:813.0px;height:16px;line-height:16px;text-align:right;transform:scaleX(0.93);transform-origin:100% 0;">0.00</div>
<div class="t" style="right:532px;top:813.0px;height:16px;line-height:16px;text-align:right;transform:scaleX(0.93);transform-origin:100% 0;">0.00</div>
<div class="t" style="left:985px;top:724.5px;height:20px;line-height:20px;font-size:16px;font-weight:bold;transform:scaleX(0.8685);transform-origin:0 0;color:#a0481f">Result</div>
<div style="left:1189px;top:722px;width:103px;height:22px;background:#fff;border:1px solid #d5d5d5"></div>
<svg style="position:absolute;left:1199px;top:725px;" width="17" height="15" viewBox="0 0 17 15"><rect x="0" y="2" width="6" height="1.6" fill="#5cb46c"/><rect x="2.2" y="0" width="1.6" height="6" fill="#5cb46c"/><g fill="#595959"><rect x="8" y="1" width="8" height="1.1"/><rect x="10.5" y="4" width="5.5" height="1"/><rect x="10.5" y="7" width="5.5" height="1"/><rect x="10.5" y="10" width="5.5" height="1"/><rect x="8" y="13" width="8" height="1.1"/></g></svg>
<div class="t" style="left:1221px;top:726.0px;height:16px;line-height:16px;font-size:12px;font-weight:bold;transform:scaleX(0.9337);transform-origin:0 0;color:#333">Result Plus</div>
<div style="left:1295px;top:722px;width:110px;height:22px;background:#fff;border:1px solid #d5d5d5"></div>
<svg style="position:absolute;left:1306px;top:727px;" width="15" height="12" viewBox="0 0 15 12"><rect x="0" y="0" width="9" height="3" fill="#6cbf7c"/><rect x="0" y="4.5" width="14" height="3" fill="#4f8fd4"/><rect x="0" y="9" width="10" height="3" fill="#595959"/></svg>
<div class="t" style="left:1326px;top:726.0px;height:16px;line-height:16px;font-size:12px;font-weight:bold;transform:scaleX(0.9714);transform-origin:0 0;color:#333">Comparison</div>
<div style="left:1407px;top:722px;width:86px;height:22px;background:#fff;border:1px solid #d5d5d5"></div>
<svg style="position:absolute;left:1419px;top:725px;" width="16" height="16" viewBox="0 0 16 16"><path d="M10 0.8 L0.8 0.8 L0.8 14.5 L12 14.5 L12 12" fill="none" stroke="#595959" stroke-width="1.1"/><path d="M4 13 L5 10 L12.5 2.5 L15 5 L7.5 12.5 Z" fill="#4f8fd4"/></svg>
<div class="t" style="left:1440px;top:726.0px;height:16px;line-height:16px;font-size:12px;font-weight:bold;transform:scaleX(0.9766);transform-origin:0 0;color:#333">Remark</div>
<div style="left:986px;top:746px;width:120px;height:21px;background:#f3f3f3"></div>
<div style="left:1106px;top:746px;width:133px;height:21px;background:#fff"></div>
<div style="left:986px;top:767px;width:120px;height:21px;background:#f3f3f3"></div>
<div style="left:1106px;top:767px;width:133px;height:21px;background:#fff"></div>
<div style="left:986px;top:788px;width:120px;height:21px;background:#f3f3f3"></div>
<div style="left:1106px;top:788px;width:133px;height:21px;background:#fffde3"></div>
<div style="left:986px;top:809px;width:120px;height:21px;background:#f3f3f3"></div>
<div style="left:1106px;top:809px;width:133px;height:21px;background:#fffde3"></div>
<div style="left:986px;top:830px;width:120px;height:21px;background:#f3f3f3"></div>
<div style="left:1106px;top:830px;width:133px;height:21px;background:#fffde3"></div>
<div style="left:986px;top:746px;width:1px;height:106px;background:#dcdcdc"></div>
<div style="left:1106px;top:746px;width:1px;height:106px;background:#dcdcdc"></div>
<div style="left:1239px;top:746px;width:1px;height:106px;background:#dcdcdc"></div>
<div style="left:986px;top:746px;width:254px;height:1px;background:#dcdcdc"></div>
<div style="left:986px;top:767px;width:254px;height:1px;background:#dcdcdc"></div>
<div style="left:986px;top:788px;width:254px;height:1px;background:#dcdcdc"></div>
<div style="left:986px;top:809px;width:254px;height:1px;background:#dcdcdc"></div>
<div style="left:986px;top:830px;width:254px;height:1px;background:#dcdcdc"></div>
<div style="left:986px;top:851px;width:254px;height:1px;background:#dcdcdc"></div>
<div style="left:986px;top:851px;width:254px;height:1px;background:#cfcfcf"></div>
<div class="t" style="left:990.5px;top:750.0px;height:16px;line-height:16px;transform:scaleX(0.965);transform-origin:0 0;">Hire / Day</div>
<div class="t" style="right:267px;top:750.0px;height:16px;line-height:16px;text-align:right;transform:scaleX(0.93);transform-origin:100% 0;">12,000.00</div>
<div class="t" style="left:990.5px;top:771.0px;height:16px;line-height:16px;transform:scaleX(0.965);transform-origin:0 0;">H/Add. Comm.</div>
<div class="t" style="right:267px;top:771.0px;height:16px;line-height:16px;text-align:right;transform:scaleX(0.93);transform-origin:100% 0;">3.75 %</div>
<div class="t" style="left:990.5px;top:792.0px;height:16px;line-height:16px;transform:scaleX(0.965);transform-origin:0 0;">Net Hire</div>
<div class="t" style="right:267px;top:792.0px;height:16px;line-height:16px;text-align:right;transform:scaleX(0.93);transform-origin:100% 0;">11,550.00</div>
<div class="t" style="left:990.5px;top:813.0px;height:16px;line-height:16px;transform:scaleX(0.965);transform-origin:0 0;">Off Hire</div>
<div class="t" style="right:267px;top:813.0px;height:16px;line-height:16px;text-align:right;transform:scaleX(0.93);transform-origin:100% 0;">0.00</div>
<div class="t" style="left:990.5px;top:833.75px;height:16px;line-height:16px;transform:scaleX(0.965);transform-origin:0 0;">C/Base</div>
<div class="t" style="right:267px;top:833.75px;height:16px;line-height:16px;text-align:right;transform:scaleX(0.93);transform-origin:100% 0;">12,229.21</div>
<svg style="position:absolute;left:1109px;top:751.0px;" width="14" height="14" viewBox="0 0 14 14"><circle cx="5.6" cy="5.6" r="4.6" fill="none" stroke="#555" stroke-width="1.15"/><line x1="8.9" y1="8.9" x2="12.6" y2="12.6" stroke="#555" stroke-width="1.5" stroke-linecap="round"/></svg>
<svg style="position:absolute;left:1109px;top:813.5px;" width="14" height="14" viewBox="0 0 14 14"><circle cx="5.6" cy="5.6" r="4.6" fill="none" stroke="#555" stroke-width="1.15"/><line x1="8.9" y1="8.9" x2="12.6" y2="12.6" stroke="#555" stroke-width="1.5" stroke-linecap="round"/></svg>
<div style="left:1239px;top:746px;width:121px;height:21px;background:#f3f3f3"></div>
<div style="left:1360px;top:746px;width:132px;height:21px;background:#fffde3"></div>
<div style="left:1239px;top:767px;width:121px;height:21px;background:#f3f3f3"></div>
<div style="left:1360px;top:767px;width:132px;height:21px;background:#fffde3"></div>
<div style="left:1239px;top:788px;width:121px;height:21px;background:#f3f3f3"></div>
<div style="left:1360px;top:788px;width:132px;height:21px;background:#fffde3"></div>
<div style="left:1239px;top:809px;width:121px;height:21px;background:#f3f3f3"></div>
<div style="left:1360px;top:809px;width:132px;height:21px;background:#fffde3"></div>
<div style="left:1239px;top:830px;width:121px;height:21px;background:#f3f3f3"></div>
<div style="left:1360px;top:830px;width:132px;height:21px;background:#fffde3"></div>
<div style="left:1239px;top:851px;width:121px;height:21px;background:#f3f3f3"></div>
<div style="left:1360px;top:851px;width:132px;height:21px;background:#fffde3"></div>
<div style="left:1239px;top:746px;width:1px;height:127px;background:#dcdcdc"></div>
<div style="left:1360px;top:746px;width:1px;height:127px;background:#dcdcdc"></div>
<div style="left:1492px;top:746px;width:1px;height:127px;background:#dcdcdc"></div>
<div style="left:1239px;top:746px;width:254px;height:1px;background:#dcdcdc"></div>
<div style="left:1239px;top:767px;width:254px;height:1px;background:#dcdcdc"></div>
<div style="left:1239px;top:788px;width:254px;height:1px;background:#dcdcdc"></div>
<div style="left:1239px;top:809px;width:254px;height:1px;background:#dcdcdc"></div>
<div style="left:1239px;top:830px;width:254px;height:1px;background:#dcdcdc"></div>
<div style="left:1239px;top:851px;width:254px;height:1px;background:#dcdcdc"></div>
<div style="left:1239px;top:872px;width:254px;height:1px;background:#dcdcdc"></div>
<div style="left:1239px;top:872px;width:254px;height:1px;background:#cfcfcf"></div>
<div class="t" style="left:1243px;top:750.0px;height:16px;line-height:16px;transform:scaleX(0.965);transform-origin:0 0;">Revenue</div>
<div class="t" style="right:13.5px;top:750.0px;height:16px;line-height:16px;text-align:right;transform:scaleX(0.93);transform-origin:100% 0;">684,000.00</div>
<div class="t" style="left:1243px;top:771.0px;height:16px;line-height:16px;transform:scaleX(0.965);transform-origin:0 0;">Op. Expense</div>
<div class="t" style="right:13.5px;top:771.0px;height:16px;line-height:16px;text-align:right;transform:scaleX(0.93);transform-origin:100% 0;">399,335.01</div>
<div class="t" style="left:1243px;top:792.0px;height:16px;line-height:16px;transform:scaleX(0.965);transform-origin:0 0;">Op. Profit</div>
<div class="t" style="right:13.5px;top:792.0px;height:16px;line-height:16px;text-align:right;transform:scaleX(0.93);transform-origin:100% 0;">284,664.99</div>
<div class="t" style="left:1243px;top:813.0px;height:16px;line-height:16px;transform:scaleX(0.965);transform-origin:0 0;">Total Hire</div>
<div class="t" style="right:13.5px;top:813.0px;height:16px;line-height:16px;text-align:right;transform:scaleX(0.93);transform-origin:100% 0;">268,854.60</div>
<div class="t" style="left:1243px;top:833.75px;height:16px;line-height:16px;transform:scaleX(0.965);transform-origin:0 0;">Total Expense</div>
<div class="t" style="right:13.5px;top:833.75px;height:16px;line-height:16px;text-align:right;transform:scaleX(0.93);transform-origin:100% 0;">668,189.61</div>
<div class="t" style="left:1243px;top:854.5px;height:16px;line-height:16px;font-weight:bold">PROFIT (USD)</div>
<div class="t" style="right:13.5px;top:854.5px;height:16px;line-height:16px;text-align:right;font-weight:bold">15,810.39</div>
<div style="left:2px;top:916px;width:1489px;height:5px;background:#bababa"></div>
<div style="left:2px;top:921px;width:1498px;height:30px;background:#217346"></div>
<div class="t" style="left:16.3px;top:928.5px;height:16px;line-height:16px;transform:scaleX(0.965);transform-origin:0 0;color:#fff">Reset</div>
<div class="t" style="left:59.5px;top:928.0px;height:16px;line-height:16px;color:#3d3d3d;font-size:15px;font-weight:bold">−</div>
<div style="left:72px;top:934px;width:117px;height:4px;background:#e8e8e8;border:1px solid #cfcfcf"></div>
<div style="left:94px;top:929px;width:6px;height:14px;background:#3a3a3a;border:1px solid #ddd"></div>
<div class="t" style="left:192.5px;top:928.0px;height:16px;line-height:16px;color:#3d3d3d;font-size:15px;font-weight:bold">+</div>
<div class="t" style="left:219.2px;top:928.5px;height:16px;line-height:16px;font-size:12px;transform:scaleX(0.9260);transform-origin:0 0;color:#fff">100 %</div>
<div style="left:258px;top:926px;width:1px;height:21px;background:#9bbfa8"></div>
<div style="left:505px;top:926px;width:1px;height:21px;background:#9bbfa8"></div>
<div style="left:855px;top:926px;width:1px;height:21px;background:#9bbfa8"></div>
<div style="left:1206px;top:926px;width:1px;height:21px;background:#9bbfa8"></div>
<div class="t" style="left:337.6px;top:928.5px;height:16px;line-height:16px;font-size:12px;transform:scaleX(0.9541);transform-origin:0 0;color:#fff">Great Circle Line</div>
<div class="t" style="left:580px;top:928.5px;height:16px;line-height:16px;font-size:12px;transform:scaleX(0.9583);transform-origin:0 0;color:#fff">Anti Piracy : JWLA032 (18th Dec 2023)</div>
<div class="t" style="left:925px;top:928.5px;height:16px;line-height:16px;font-size:12px;transform:scaleX(0.9635);transform-origin:0 0;color:#fff">ECA : IMO, Mediterranean, Each Country</div>
<div class="t" style="left:1278px;top:928.5px;height:16px;line-height:16px;font-size:12px;transform:scaleX(0.9527);transform-origin:0 0;color:#fff">Main Currency : USD</div>
<svg style="position:absolute;left:1487px;top:938px;" width="10" height="10" viewBox="0 0 10 10"><circle cx="8" cy="1" r="0.8" fill="#ddd"/><circle cx="6" cy="3" r="0.8" fill="#ddd"/><circle cx="8" cy="3" r="0.8" fill="#ddd"/><circle cx="4" cy="5" r="0.8" fill="#ddd"/><circle cx="6" cy="5" r="0.8" fill="#ddd"/><circle cx="8" cy="5" r="0.8" fill="#ddd"/><circle cx="2" cy="7" r="0.8" fill="#ddd"/><circle cx="4" cy="7" r="0.8" fill="#ddd"/><circle cx="6" cy="7" r="0.8" fill="#ddd"/><circle cx="8" cy="7" r="0.8" fill="#ddd"/></svg>
<svg style="position:absolute;left:0;top:0" width="1502" height="953" viewBox="0 0 1502 953"><rect x="180.5" y="64.5" width="59.5" height="70" fill="none" stroke="#fa0a0a" stroke-width="2" stroke-dasharray="5.8 2.2"/><rect x="839" y="723" width="138" height="23" fill="none" stroke="#fa0a0a" stroke-width="2" stroke-dasharray="5.8 2.2"/><line x1="674" y1="398.8" x2="220.36" y2="140.44" stroke="#000" stroke-width="2"/><path d="M210.80 135.00 L225.31 135.79 L218.88 147.08 Z" fill="#000"/><line x1="816" y1="427" x2="904.72" y2="711.30" stroke="#000" stroke-width="2"/><path d="M908.00 721.80 L897.92 711.33 L910.33 707.45 Z" fill="#000"/></svg>
<div style="left:674px;top:368px;width:285px;height:60px;background:#6f98ca;border:1.3px solid #151515"></div>
<div class="t" style="left:689.5px;top:383.5px;height:30px;line-height:30px;font-size:23px;transform:scaleX(1.0410);transform-origin:0 0;color:#111">Click “Bunker Simulator.</div>
<svg style="position:absolute;left:153px;top:48px;" width="40" height="40" viewBox="0 0 40 40"><circle cx="19.3" cy="19.2" r="18" fill="#7ca1d2" stroke="#2a2a2a" stroke-width="1.3"/></svg>
<div class="t" style="left:152.0px;top:53.3px;width:40px;height:30px;line-height:30px;text-align:center;color:#fff;font-size:23px;font-weight:bold">1</div>
</body></html>
